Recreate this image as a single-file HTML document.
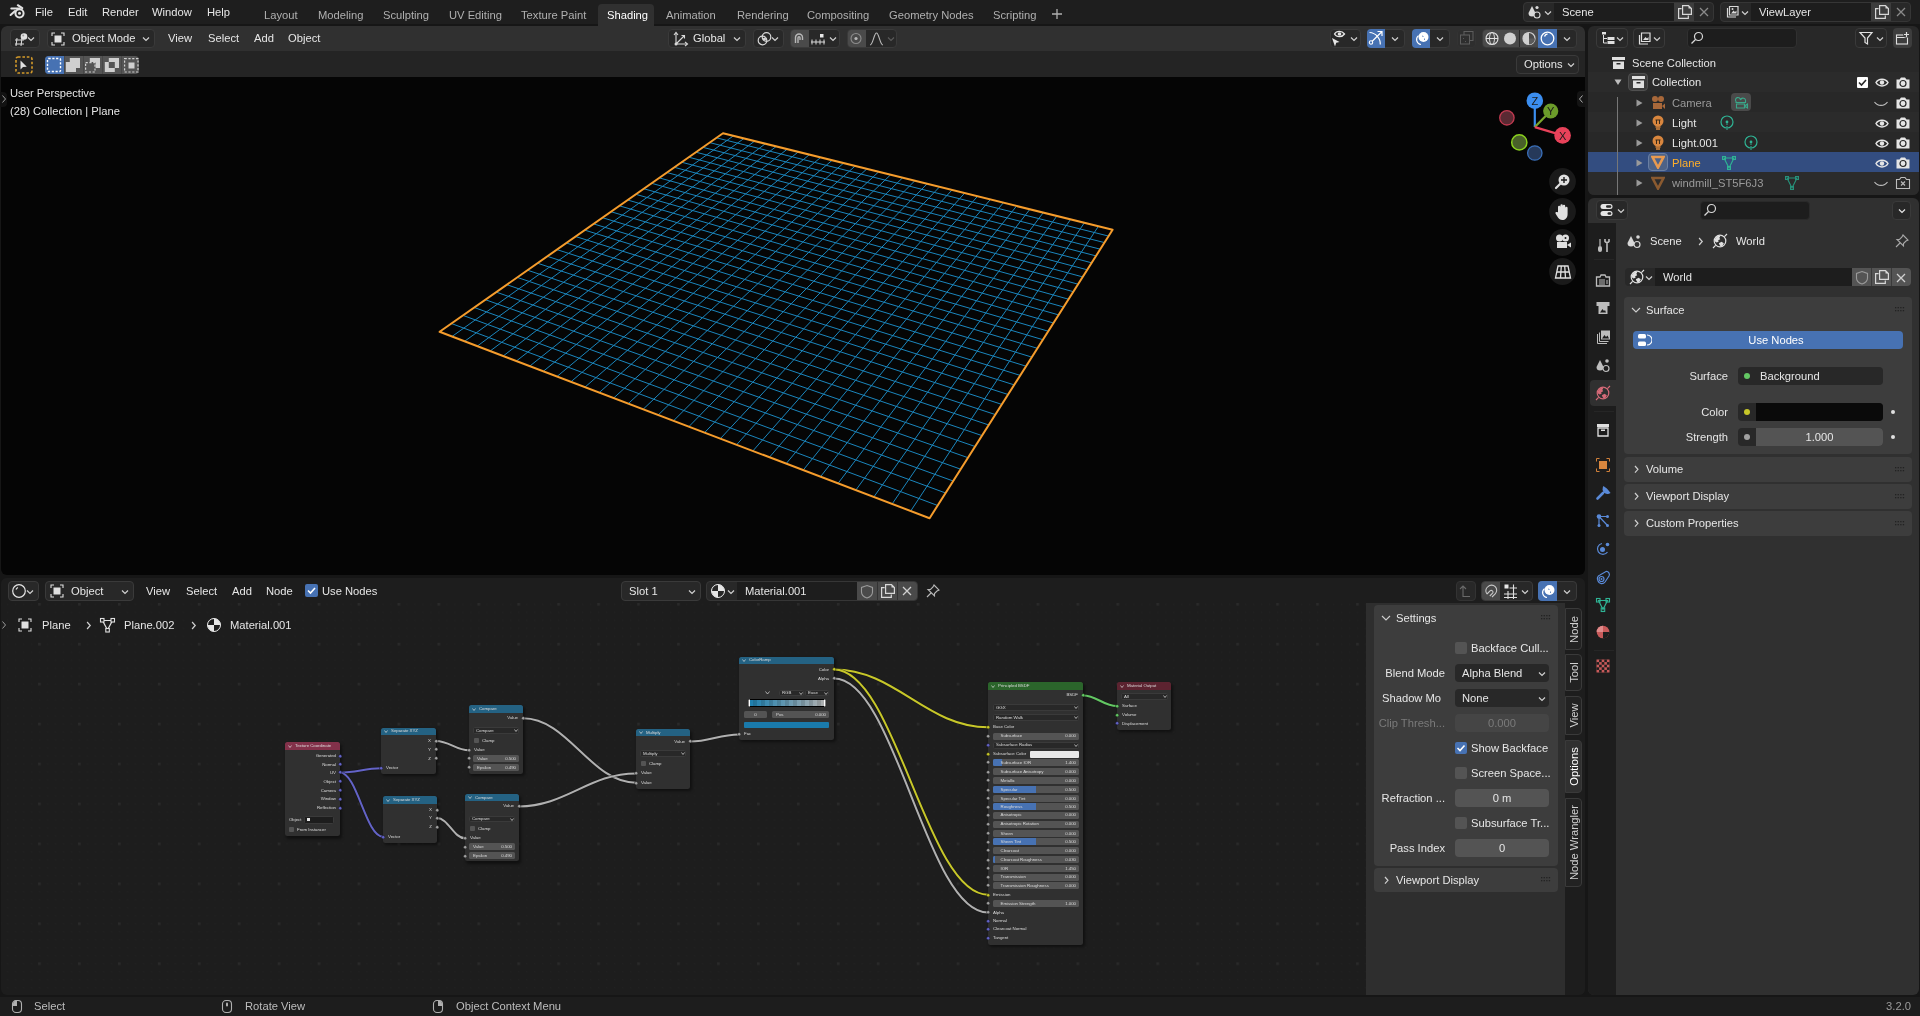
<!DOCTYPE html>
<html><head><meta charset="utf-8"><style>
html,body{margin:0;padding:0;width:1920px;height:1016px;overflow:hidden;background:#161616;}
body{position:relative;font-family:"Liberation Sans", sans-serif;}
.a{position:absolute;}
.t{position:absolute;white-space:nowrap;}
</style></head><body><div style="position:absolute;left:0;top:0;width:1920px;height:1016px;will-change:transform;">
<div class="a" style="left:0;top:0;width:1920px;height:1016px;background:#161616"></div>
<div class="a" style="left:0px;top:0px;width:1920px;height:24px;background:#1e1e1e;"></div>
<svg class="a" style="left:8px;top:3px;" width="18" height="18" viewBox="0 0 18 18"><g stroke="#e2e2e2" stroke-linecap="round" fill="none">
<circle cx="11.5" cy="10.3" r="4.1" stroke-width="2"/>
<path d="M3.3 5.6 H11.5" stroke-width="2"/><path d="M2.6 12 L7 8" stroke-width="2"/><path d="M9.8 2.2 L14.3 5.2" stroke-width="2"/>
</g><circle cx="11.5" cy="10.3" r="1.5" fill="#e2e2e2"/></svg>
<div class="t" style="left:35px;top:4.0px;font-size:11.2px;line-height:17px;color:#e6e6e6;">File</div>
<div class="t" style="left:68px;top:4.0px;font-size:11.2px;line-height:17px;color:#e6e6e6;">Edit</div>
<div class="t" style="left:102px;top:4.0px;font-size:11.2px;line-height:17px;color:#e6e6e6;">Render</div>
<div class="t" style="left:152px;top:4.0px;font-size:11.2px;line-height:17px;color:#e6e6e6;">Window</div>
<div class="t" style="left:207px;top:4.0px;font-size:11.2px;line-height:17px;color:#e6e6e6;">Help</div>
<div class="a" style="left:598px;top:4px;width:56px;height:22px;background:#303030;border-radius:4px 4px 0 0;"></div>
<div class="t" style="left:264px;top:6.5px;font-size:11.2px;line-height:17px;color:#b0b0b0;">Layout</div>
<div class="t" style="left:318px;top:6.5px;font-size:11.2px;line-height:17px;color:#b0b0b0;">Modeling</div>
<div class="t" style="left:383px;top:6.5px;font-size:11.2px;line-height:17px;color:#b0b0b0;">Sculpting</div>
<div class="t" style="left:449px;top:6.5px;font-size:11.2px;line-height:17px;color:#b0b0b0;">UV Editing</div>
<div class="t" style="left:521px;top:6.5px;font-size:11.2px;line-height:17px;color:#b0b0b0;">Texture Paint</div>
<div class="t" style="left:607px;top:6.5px;font-size:11.2px;line-height:17px;color:#ffffff;">Shading</div>
<div class="t" style="left:666px;top:6.5px;font-size:11.2px;line-height:17px;color:#b0b0b0;">Animation</div>
<div class="t" style="left:737px;top:6.5px;font-size:11.2px;line-height:17px;color:#b0b0b0;">Rendering</div>
<div class="t" style="left:807px;top:6.5px;font-size:11.2px;line-height:17px;color:#b0b0b0;">Compositing</div>
<div class="t" style="left:889px;top:6.5px;font-size:11.2px;line-height:17px;color:#b0b0b0;">Geometry Nodes</div>
<div class="t" style="left:993px;top:6.5px;font-size:11.2px;line-height:17px;color:#b0b0b0;">Scripting</div>
<svg class="a" style="left:1051px;top:8px;" width="12" height="12" viewBox="0 0 12 12"><path d="M6 1 V11 M1 6 H11" stroke="#b0b0b0" stroke-width="1.3"/></svg>
<div class="a" style="left:1523px;top:2px;width:191px;height:20px;background:#282828;border-radius:4px;box-sizing:border-box;border:1px solid #363636;"></div>
<div class="a" style="left:1554px;top:3px;width:120px;height:18px;background:#1d1d1d;"></div>
<div class="a" style="left:1674px;top:3px;width:20px;height:18px;background:#3d3d3d;"></div>
<div class="t" style="left:1562px;top:3.5px;font-size:11.2px;line-height:17px;color:#e6e6e6;">Scene</div>
<svg class="a" style="left:1527px;top:4px;" width="22" height="16" viewBox="0 0 22 16"><path d="M5 2 L1.5 9 A3.5 3.5 0 0 0 8.5 9 Z" fill="#d8d8d8"/><circle cx="10" cy="3.5" r="1.6" fill="#d8d8d8"/>
<circle cx="10" cy="11" r="3" fill="#282828" stroke="#d8d8d8" stroke-width="1.1"/></svg>
<svg class="a" style="left:1544px;top:9.5px;" width="8" height="6" viewBox="0 0 8 6"><path d="M1 1.5 L4 4.5 L7 1.5" fill="none" stroke="#d0d0d0" stroke-width="1.2"/></svg>
<svg class="a" style="left:1677px;top:4px;" width="16" height="16" viewBox="0 0 16 16"><path d="M5.6 1.7 H11.5 L14.4 4.6 V10.4 H5.6 Z" fill="none" stroke="#d8d8d8" stroke-width="1.2"/><path d="M11.5 1.7 L14.4 4.6 H11.5 Z" fill="#d8d8d8"/><path d="M4.6 4.6 H1.6 V14.4 H11.3 V11.4" fill="none" stroke="#d8d8d8" stroke-width="1.2"/></svg>
<svg class="a" style="left:1699px;top:7px;" width="10" height="10" viewBox="0 0 10 10"><path d="M1 1 L9 9 M9 1 L1 9" stroke="#8a8a8a" stroke-width="1.3"/></svg>
<div class="a" style="left:1720px;top:2px;width:191px;height:20px;background:#282828;border-radius:4px;box-sizing:border-box;border:1px solid #363636;"></div>
<div class="a" style="left:1751px;top:3px;width:120px;height:18px;background:#1d1d1d;"></div>
<div class="a" style="left:1871px;top:3px;width:20px;height:18px;background:#3d3d3d;"></div>
<div class="t" style="left:1759px;top:3.5px;font-size:11.2px;line-height:17px;color:#e6e6e6;">ViewLayer</div>
<svg class="a" style="left:1724px;top:4px;" width="22" height="16" viewBox="0 0 22 16"><path d="M3.5 4 V13 H12 M5.5 2.5 H14 V11 H5.5 Z" fill="none" stroke="#d8d8d8" stroke-width="1.2"/><path d="M7 9.5 L9.5 6.5 L11 8 L12.5 6.5 V9.5 Z" fill="#d8d8d8"/><circle cx="8.5" cy="5" r="1" fill="#d8d8d8"/></svg>
<svg class="a" style="left:1741px;top:9.5px;" width="8" height="6" viewBox="0 0 8 6"><path d="M1 1.5 L4 4.5 L7 1.5" fill="none" stroke="#d0d0d0" stroke-width="1.2"/></svg>
<svg class="a" style="left:1874px;top:4px;" width="16" height="16" viewBox="0 0 16 16"><path d="M5.6 1.7 H11.5 L14.4 4.6 V10.4 H5.6 Z" fill="none" stroke="#d8d8d8" stroke-width="1.2"/><path d="M11.5 1.7 L14.4 4.6 H11.5 Z" fill="#d8d8d8"/><path d="M4.6 4.6 H1.6 V14.4 H11.3 V11.4" fill="none" stroke="#d8d8d8" stroke-width="1.2"/></svg>
<svg class="a" style="left:1896px;top:7px;" width="10" height="10" viewBox="0 0 10 10"><path d="M1 1 L9 9 M9 1 L1 9" stroke="#8a8a8a" stroke-width="1.3"/></svg>
<div class="a" style="left:1px;top:26px;width:1584px;height:549px;background:#050505;border-radius:6px;"></div>
<div class="a" style="left:1px;top:26px;width:1584px;height:25px;background:#303030;border-radius:6px 6px 0 0;"></div>
<div class="a" style="left:1px;top:51px;width:1584px;height:26px;background:#242424;"></div>
<svg class="a" style="left:0px;top:0px;" width="1586" height="576" viewBox="0 0 1586 576"><path d="M451.4 323.5L937.7 505.5M452.0 336.5L733.5 135.8M463.0 315.4L945.6 493.0M464.6 341.3L744.0 138.4M474.3 307.5L953.2 481.0M477.3 346.1L754.7 141.1M485.4 299.7L960.7 469.2M490.2 351.0L765.4 143.7M496.2 292.1L968.0 457.7M503.2 356.0L776.3 146.4M506.9 284.7L975.1 446.5M516.4 361.0L787.3 149.1M517.3 277.4L982.0 435.6M529.8 366.1L798.3 151.9M527.5 270.2L988.8 425.0M543.3 371.3L809.5 154.6M537.5 263.2L995.4 414.6M557.0 376.5L820.7 157.4M547.3 256.3L1001.8 404.4M570.9 381.8L832.1 160.3M556.9 249.6L1008.1 394.5M585.0 387.1L843.6 163.1M566.4 243.0L1014.2 384.9M599.3 392.5L855.2 166.0M575.6 236.5L1020.2 375.4M613.7 398.0L866.9 168.9M584.7 230.1L1026.1 366.2M628.3 403.6L878.7 171.8M593.6 223.9L1031.8 357.1M643.2 409.2L890.6 174.8M602.4 217.7L1037.4 348.3M658.2 415.0L902.7 177.7M610.9 211.7L1042.9 339.7M673.5 420.8L914.8 180.8M619.4 205.8L1048.2 331.2M688.9 426.6L927.1 183.8M627.6 200.0L1053.5 323.0M704.6 432.6L939.5 186.9M635.8 194.3L1058.6 314.9M720.4 438.6L952.0 190.0M643.7 188.7L1063.6 307.0M736.5 444.8L964.7 193.1M651.6 183.3L1068.5 299.2M752.8 451.0L977.5 196.3M659.3 177.9L1073.4 291.7M769.4 457.3L990.4 199.5M666.8 172.5L1078.1 284.2M786.2 463.6L1003.4 202.7M674.3 167.3L1082.7 276.9M803.2 470.1L1016.6 206.0M681.6 162.2L1087.2 269.8M820.5 476.7L1029.9 209.3M688.8 157.2L1091.7 262.8M838.0 483.4L1043.3 212.6M695.9 152.2L1096.0 255.9M855.8 490.1L1056.9 216.0M702.8 147.3L1100.3 249.2M873.8 497.0L1070.6 219.4M709.7 142.6L1104.5 242.6M892.1 504.0L1084.4 222.8M716.4 137.8L1108.6 236.1M910.7 511.0L1098.4 226.3" fill="none" stroke="#1b86bd" stroke-width="1"/><path d="M439.6 331.8L723.0 133.2L1112.6 229.8L929.6 518.2Z" fill="none" stroke="#f59c2c" stroke-width="2" stroke-linejoin="round"/></svg>
<div class="t" style="left:10px;top:84.9px;font-size:11.2px;line-height:17px;color:#e6e6e6;text-shadow:0 1px 1px #000;">User Perspective</div>
<div class="t" style="left:10px;top:102.9px;font-size:11.2px;line-height:17px;color:#e6e6e6;text-shadow:0 1px 1px #000;">(28) Collection | Plane</div>
<div class="a" style="left:0px;top:92px;width:7px;height:15px;background:#121212;border-radius:0 4px 4px 0;"></div>
<svg class="a" style="left:1px;top:93.5px;" width="6" height="10" viewBox="0 0 6 10"><path d="M1.5 1.5 L4.5 5 L1.5 8.5" fill="none" stroke="#9a9a9a" stroke-width="1"/></svg>
<div class="a" style="left:1577px;top:91px;width:8px;height:16px;background:#141414;border-radius:4px 0 0 4px;"></div>
<svg class="a" style="left:1578px;top:94px;" width="6" height="10" viewBox="0 0 6 10"><path d="M4.5 1.5 L1.5 5 L4.5 8.5" fill="none" stroke="#b0b0b0" stroke-width="1"/></svg>
<svg class="a" style="left:1490px;top:85px;" width="90" height="85" viewBox="0 0 90 85"><g transform="translate(-1490,-85)">
<line x1="1534.8" y1="127.1" x2="1534.8" y2="100.7" stroke="#3b8ef0" stroke-width="2.2"/>
<line x1="1534.8" y1="127.1" x2="1550.7" y2="111" stroke="#7ba72c" stroke-width="2.2"/>
<line x1="1534.8" y1="127.1" x2="1562.6" y2="135.4" stroke="#e8425a" stroke-width="2.2"/>
<circle cx="1506.9" cy="117.8" r="7.2" fill="#5a2a33" stroke="#c23a50" stroke-width="1.3"/>
<circle cx="1519.3" cy="142.4" r="7.6" fill="#49602a" stroke="#8ad11e" stroke-width="1.5"/>
<circle cx="1534.8" cy="153" r="7.2" fill="#26395a" stroke="#3a6fb8" stroke-width="1.3"/>
<circle cx="1534.8" cy="100.7" r="8.3" fill="#3b8ef0"/>
<circle cx="1550.7" cy="111" r="7.6" fill="#6c9c2a"/>
<circle cx="1562.6" cy="135.4" r="8.3" fill="#e8425a"/>
<text x="1534.8" y="104.8" font-size="11" text-anchor="middle" fill="#1a1a1a" font-family="Liberation Sans">Z</text>
<text x="1550.7" y="115" font-size="11" text-anchor="middle" fill="#1a1a1a" font-family="Liberation Sans">Y</text>
<text x="1562.6" y="139.5" font-size="11" text-anchor="middle" fill="#1a1a1a" font-family="Liberation Sans">X</text>
</g></svg>
<svg class="a" style="left:1549px;top:167.7px;" width="27" height="27" viewBox="0 0 27 27"><circle cx="13.5" cy="13.5" r="13.4" fill="#1a1a1a"/></svg>
<svg class="a" style="left:1549px;top:198.3px;" width="27" height="27" viewBox="0 0 27 27"><circle cx="13.5" cy="13.5" r="13.4" fill="#1a1a1a"/></svg>
<svg class="a" style="left:1549px;top:228.7px;" width="27" height="27" viewBox="0 0 27 27"><circle cx="13.5" cy="13.5" r="13.4" fill="#1a1a1a"/></svg>
<svg class="a" style="left:1549px;top:258.2px;" width="27" height="27" viewBox="0 0 27 27"><circle cx="13.5" cy="13.5" r="13.4" fill="#1a1a1a"/></svg>
<svg class="a" style="left:1553px;top:172px;" width="20" height="20" viewBox="0 0 20 20"><circle cx="11" cy="8" r="5.5" fill="#e0e0e0"/><path d="M11 5 V11 M8 8 H14" stroke="#1a1a1a" stroke-width="1.4"/><path d="M7 12 L3 16" stroke="#e0e0e0" stroke-width="2.2" stroke-linecap="round"/></svg>
<svg class="a" style="left:1553px;top:202px;" width="20" height="20" viewBox="0 0 20 20"><path d="M5 10 V5 a1.2 1.2 0 0 1 2.4 0 V9 V3.5 a1.2 1.2 0 0 1 2.4 0 V9 V4 a1.2 1.2 0 0 1 2.4 0 V9.5 V6 a1.2 1.2 0 0 1 2.4 0 V12 C14.6 16 12 18 9.5 18 C7 18 5.5 16.5 4 14 L2.5 11.5 a1.2 1.2 0 0 1 2-1.2 Z" fill="#e0e0e0"/></svg>
<svg class="a" style="left:1553px;top:232px;" width="20" height="20" viewBox="0 0 20 20"><circle cx="6.5" cy="6" r="3.5" fill="#e0e0e0"/><circle cx="12.5" cy="6" r="3.5" fill="#e0e0e0"/><rect x="4" y="10" width="10" height="6" fill="#e0e0e0"/><path d="M14 13 L18 10.5 V15.5 Z" fill="#e0e0e0"/><circle cx="12.5" cy="6" r="1" fill="#1a1a1a"/></svg>
<svg class="a" style="left:1553px;top:262px;" width="20" height="20" viewBox="0 0 20 20"><path d="M5 4 H15 L17.5 16 H2.5 Z M3.8 10 H16.3 M8.3 4 L7.5 16 M11.7 4 L12.5 16" fill="none" stroke="#e0e0e0" stroke-width="1.3"/></svg>
<div class="a" style="left:10px;top:29px;width:30px;height:19px;background:#282828;border-radius:4px;box-sizing:border-box;border:1px solid #3a3a3a;"></div>
<svg class="a" style="left:27px;top:36.0px;" width="8" height="6" viewBox="0 0 8 6"><path d="M1 1.5 L4 4.5 L7 1.5" fill="none" stroke="#d0d0d0" stroke-width="1.2"/></svg>
<svg class="a" style="left:13px;top:31px;" width="20" height="16" viewBox="0 0 20 16"><path d="M2 9 H11 M2 13 H11 M4 7 L3 15 M9 7 L8 15" stroke="#d8d8d8" stroke-width="1.1" fill="none"/><circle cx="11" cy="5.5" r="3.3" fill="#e0e0e0"/><circle cx="10.2" cy="4.6" r="1" fill="#9a9a9a"/></svg>
<div class="a" style="left:47px;top:29px;width:108px;height:19px;background:#282828;border-radius:4px;box-sizing:border-box;border:1px solid #3a3a3a;"></div>
<svg class="a" style="left:142px;top:36.0px;" width="8" height="6" viewBox="0 0 8 6"><path d="M1 1.5 L4 4.5 L7 1.5" fill="none" stroke="#d0d0d0" stroke-width="1.2"/></svg>
<svg class="a" style="left:51px;top:31.5px;" width="14" height="14" viewBox="0 0 14 14"><path d="M1 4 V1 H4 M10 1 H13 V4 M13 10 V13 H10 M4 13 H1 V10" fill="none" stroke="#e0e0e0" stroke-width="1.1"/><rect x="3.5" y="3.5" width="7" height="7" fill="#e0e0e0"/></svg>
<div class="t" style="left:72px;top:30.0px;font-size:11.2px;line-height:17px;color:#e6e6e6;">Object Mode</div>
<div class="t" style="left:168px;top:30.0px;font-size:11.2px;line-height:17px;color:#e6e6e6;">View</div>
<div class="t" style="left:208px;top:30.0px;font-size:11.2px;line-height:17px;color:#e6e6e6;">Select</div>
<div class="t" style="left:254px;top:30.0px;font-size:11.2px;line-height:17px;color:#e6e6e6;">Add</div>
<div class="t" style="left:288px;top:30.0px;font-size:11.2px;line-height:17px;color:#e6e6e6;">Object</div>
<div class="a" style="left:668px;top:29px;width:78px;height:19px;background:#282828;border-radius:4px;box-sizing:border-box;border:1px solid #3a3a3a;"></div>
<svg class="a" style="left:733px;top:36.0px;" width="8" height="6" viewBox="0 0 8 6"><path d="M1 1.5 L4 4.5 L7 1.5" fill="none" stroke="#d0d0d0" stroke-width="1.2"/></svg>
<svg class="a" style="left:673px;top:31px;" width="16" height="16" viewBox="0 0 16 16"><path d="M3 2 V13 H14 M3 13 L11 5" fill="none" stroke="#d8d8d8" stroke-width="1.1"/><path d="M1 4 L3 1.5 L5 4 M12 11 L14.5 13 L12 15 M8.5 4.5 H11.5 V7.5" fill="none" stroke="#d8d8d8" stroke-width="1.1"/><circle cx="3" cy="13" r="1.5" fill="#d8d8d8"/></svg>
<div class="t" style="left:693px;top:30.0px;font-size:11.2px;line-height:17px;color:#e6e6e6;">Global</div>
<div class="a" style="left:753px;top:29px;width:31px;height:19px;background:#282828;border-radius:4px;box-sizing:border-box;border:1px solid #3a3a3a;"></div>
<svg class="a" style="left:771px;top:36.0px;" width="8" height="6" viewBox="0 0 8 6"><path d="M1 1.5 L4 4.5 L7 1.5" fill="none" stroke="#d0d0d0" stroke-width="1.2"/></svg>
<svg class="a" style="left:756px;top:31px;" width="18" height="16" viewBox="0 0 18 16"><circle cx="6.5" cy="9.5" r="4.3" fill="none" stroke="#d8d8d8" stroke-width="1.2"/><circle cx="10.5" cy="6" r="4.3" fill="none" stroke="#d8d8d8" stroke-width="1.2"/><circle cx="8.5" cy="8" r="1.6" fill="#d8d8d8"/></svg>
<div class="a" style="left:790px;top:29px;width:50px;height:19px;background:#282828;border-radius:4px;box-sizing:border-box;border:1px solid #3a3a3a;"></div>
<div class="a" style="left:791px;top:30px;width:18px;height:17px;background:#4a4a4a;border-radius:3px 0 0 3px;"></div>
<svg class="a" style="left:792px;top:31px;" width="14" height="15" viewBox="0 0 14 15"><path d="M3.5 12 V6.5 A3.5 3.5 0 0 1 10.5 6.5 V9 M6 12 V6.8 A1 1 0 0 1 8 6.8 V9" fill="none" stroke="#b8b8b8" stroke-width="1.4"/></svg>
<svg class="a" style="left:810px;top:31px;" width="16" height="16" viewBox="0 0 16 16"><path d="M1 11 H15 M2 8.5 V13.5 M6 8.5 V13.5 M10 8.5 V13.5 M14 8.5 V13.5" stroke="#d8d8d8" stroke-width="1"/><rect x="10" y="3" width="3.5" height="3.5" fill="#e8e8e8"/></svg>
<svg class="a" style="left:829px;top:35.5px;" width="8" height="6" viewBox="0 0 8 6"><path d="M1 1.5 L4 4.5 L7 1.5" fill="none" stroke="#d0d0d0" stroke-width="1.2"/></svg>
<div class="a" style="left:847px;top:29px;width:50px;height:19px;background:#282828;border-radius:4px;box-sizing:border-box;border:1px solid #3a3a3a;"></div>
<div class="a" style="left:848px;top:30px;width:18px;height:17px;background:#4a4a4a;border-radius:3px 0 0 3px;"></div>
<svg class="a" style="left:849px;top:31px;" width="14" height="15" viewBox="0 0 14 15"><circle cx="7" cy="7.5" r="5" fill="none" stroke="#8c8c8c" stroke-width="1.1"/><circle cx="7" cy="7.5" r="1.6" fill="#b8b8b8"/></svg>
<svg class="a" style="left:869px;top:30px;" width="16" height="18" viewBox="0 0 16 18"><path d="M1 15 C4 15 5 3 7.5 3 C10 3 11 15 14 15" fill="none" stroke="#bdbdbd" stroke-width="1.1"/></svg>
<svg class="a" style="left:887px;top:35.5px;" width="8" height="6" viewBox="0 0 8 6"><path d="M1 1.5 L4 4.5 L7 1.5" fill="none" stroke="#5a5a5a" stroke-width="1.2"/></svg>
<div class="a" style="left:1330px;top:29px;width:31px;height:19px;background:#282828;border-radius:4px;box-sizing:border-box;border:1px solid #3a3a3a;"></div>
<svg class="a" style="left:1331px;top:29px;" width="18" height="19" viewBox="0 0 18 19"><path d="M3.5 5 C5.5 1.5 11 1.5 13.5 5 C11 8.5 5.5 8.5 3.5 5 Z" fill="none" stroke="#e6e6e6" stroke-width="1.3"/><circle cx="8.5" cy="5" r="1.8" fill="#e6e6e6"/><path d="M1 9 L8.5 13 L5.2 13.8 L4 17.5 Z" fill="#e6e6e6"/></svg>
<svg class="a" style="left:1350px;top:35.5px;" width="8" height="6" viewBox="0 0 8 6"><path d="M1 1.5 L4 4.5 L7 1.5" fill="none" stroke="#d0d0d0" stroke-width="1.2"/></svg>
<div class="a" style="left:1367px;top:29px;width:38px;height:19px;background:#282828;border-radius:4px;box-sizing:border-box;border:1px solid #3a3a3a;"></div>
<div class="a" style="left:1367px;top:29px;width:18px;height:19px;background:#4772b3;border-radius:4px 0 0 4px;"></div>
<svg class="a" style="left:1368px;top:29px;" width="17" height="19" viewBox="0 0 17 19"><path d="M1.5 3.5 A11.5 11.5 0 0 1 12.3 15.5" fill="none" stroke="#fff" stroke-width="1.2"/><path d="M3.5 13 L13.5 3 M9.5 2.5 H14 V7" fill="none" stroke="#fff" stroke-width="1.2"/><circle cx="3" cy="13.5" r="1.7" fill="#4772b3" stroke="#fff" stroke-width="1.1"/></svg>
<svg class="a" style="left:1391px;top:35.5px;" width="8" height="6" viewBox="0 0 8 6"><path d="M1 1.5 L4 4.5 L7 1.5" fill="none" stroke="#d0d0d0" stroke-width="1.2"/></svg>
<div class="a" style="left:1412px;top:29px;width:38px;height:19px;background:#282828;border-radius:4px;box-sizing:border-box;border:1px solid #3a3a3a;"></div>
<div class="a" style="left:1412px;top:29px;width:18px;height:19px;background:#4772b3;border-radius:4px 0 0 4px;"></div>
<svg class="a" style="left:1413px;top:29px;" width="17" height="19" viewBox="0 0 17 19"><circle cx="10.5" cy="8" r="5" fill="#fff"/><path d="M8 15.5 A5 5 0 0 1 5.5 6.6" fill="none" stroke="#fff" stroke-width="1.2"/><path d="M9 7 L10.5 7.5 M11.5 9.5 V11" stroke="#4772b3" stroke-width="0.8"/></svg>
<svg class="a" style="left:1436px;top:35.5px;" width="8" height="6" viewBox="0 0 8 6"><path d="M1 1.5 L4 4.5 L7 1.5" fill="none" stroke="#d0d0d0" stroke-width="1.2"/></svg>
<div class="a" style="left:1457px;top:29px;width:19px;height:19px;background:#2e2e2e;border-radius:4px;box-sizing:border-box;border:1px solid #333;"></div>
<svg class="a" style="left:1459px;top:30px;" width="16" height="16" viewBox="0 0 16 16"><rect x="5" y="1.5" width="9" height="9" fill="none" stroke="#5e5e5e" stroke-width="1"/><rect x="1.5" y="5" width="9" height="9" fill="#2e2e2e" stroke="#5e5e5e" stroke-width="1"/><path d="M4.5 8 V9 M6 11.5 H7" stroke="#5e5e5e" stroke-width="0.9"/></svg>
<div class="a" style="left:1482px;top:29px;width:95px;height:19px;background:#282828;border-radius:4px;box-sizing:border-box;border:1px solid #3a3a3a;"></div>
<div class="a" style="left:1483px;top:30px;width:18px;height:17px;background:#4a4a4a;border-radius:3px 0 0 3px;"></div>
<div class="a" style="left:1501px;top:30px;width:18px;height:17px;background:#4a4a4a;"></div>
<div class="a" style="left:1520px;top:30px;width:18px;height:17px;background:#4a4a4a;"></div>
<div class="a" style="left:1538px;top:29px;width:19px;height:19px;background:#4772b3;"></div>
<svg class="a" style="left:1483px;top:30px;" width="18" height="17" viewBox="0 0 18 17"><circle cx="9" cy="8.5" r="6" fill="none" stroke="#e0e0e0" stroke-width="1.1"/><ellipse cx="9" cy="8.5" rx="2.5" ry="6" fill="none" stroke="#e0e0e0" stroke-width="1"/><path d="M3 8.5 H15" stroke="#e0e0e0" stroke-width="1"/></svg>
<svg class="a" style="left:1501px;top:30px;" width="18" height="17" viewBox="0 0 18 17"><circle cx="9" cy="8.5" r="6" fill="#d0d0d0"/></svg>
<svg class="a" style="left:1520px;top:30px;" width="18" height="17" viewBox="0 0 18 17"><circle cx="9" cy="8.5" r="6" fill="none" stroke="#d0d0d0" stroke-width="1.2"/><path d="M9 8.5 V2.5 A6 6 0 0 0 3 8.5 A6 6 0 0 0 9 14.5 Z" fill="#d0d0d0"/><path d="M9 8.5 H15 A6 6 0 0 1 9 14.5 Z" fill="#5a5a5a"/></svg>
<svg class="a" style="left:1538px;top:29px;" width="19" height="19" viewBox="0 0 19 19"><circle cx="9.5" cy="9.5" r="6.3" fill="none" stroke="#fff" stroke-width="1.3"/><path d="M6.5 7.5 A3.5 3.5 0 0 1 9.5 5" fill="none" stroke="#fff" stroke-width="1.4"/></svg>
<svg class="a" style="left:1563px;top:35.5px;" width="8" height="6" viewBox="0 0 8 6"><path d="M1 1.5 L4 4.5 L7 1.5" fill="none" stroke="#d0d0d0" stroke-width="1.2"/></svg>
<svg class="a" style="left:14px;top:55px;" width="20" height="20" viewBox="0 0 20 20"><rect x="2" y="2" width="16" height="16" rx="2" fill="none" stroke="#d49a2a" stroke-width="1.6" stroke-dasharray="2.6 1.8"/><path d="M6.5 5.5 V14.5 L9 12 L12.8 11.8 Z" fill="#e0e0e0"/></svg>
<div class="a" style="left:45px;top:56px;width:94px;height:18px;background:#545454;border-radius:4px;"></div>
<div class="a" style="left:45px;top:56px;width:19px;height:18px;background:#4772b3;border-radius:4px 0 0 4px;"></div>
<div class="a" style="left:64px;top:56px;width:1px;height:18px;background:#474747;"></div>
<div class="a" style="left:83px;top:56px;width:1px;height:18px;background:#474747;"></div>
<div class="a" style="left:102px;top:56px;width:1px;height:18px;background:#474747;"></div>
<div class="a" style="left:121px;top:56px;width:1px;height:18px;background:#474747;"></div>
<svg class="a" style="left:45px;top:56px;" width="94" height="18" viewBox="0 0 94 18"><rect x="2.5" y="2.5" width="13" height="13" rx="1" fill="none" stroke="#fff" stroke-width="1.4" stroke-dasharray="2.2 1.6"/>
<path d="M24.8 2 H35 V12 H31 V16 H20.8 V6 H24.8 Z" fill="#cfcfcf"/>
<rect x="40.6" y="6.6" width="9.4" height="9.4" fill="none" stroke="#cfcfcf" stroke-width="1.2" stroke-dasharray="2.2 1.6"/><path d="M44.8 2 H55 V12 H50.6 V6 H44.8 Z" fill="#cfcfcf"/>
<path d="M63.8 2 H74 V12 H69.8 V6 H63.8 Z M59.8 6 H63.8 V12 H69.8 V16 H59.8 Z" fill="#cfcfcf"/>
<rect x="79.6" y="2.6" width="13.4" height="13.4" fill="none" stroke="#cfcfcf" stroke-width="1.2" stroke-dasharray="2.2 1.6"/><rect x="83.5" y="6.5" width="6" height="6" fill="#cfcfcf"/></svg>
<div class="a" style="left:1516px;top:55px;width:63px;height:19px;background:#282828;border-radius:4px;box-sizing:border-box;border:1px solid #3a3a3a;"></div>
<div class="t" style="left:1524px;top:56.0px;font-size:11.2px;line-height:17px;color:#e6e6e6;">Options</div>
<svg class="a" style="left:1567px;top:62px;" width="8" height="6" viewBox="0 0 8 6"><path d="M1 1.5 L4 4.5 L7 1.5" fill="none" stroke="#d0d0d0" stroke-width="1.2"/></svg>
<div class="a" style="left:1588px;top:26px;width:331px;height:169px;background:#282828;border-radius:6px;"></div>
<div class="a" style="left:1588px;top:72px;width:331px;height:20px;background:#2b2b2b;"></div>
<div class="a" style="left:1588px;top:112px;width:331px;height:20px;background:#2b2b2b;"></div>
<div class="a" style="left:1588px;top:152px;width:331px;height:20px;background:#2b2b2b;"></div>
<div class="a" style="left:1588px;top:152px;width:331px;height:20px;background:#334d80;"></div>
<div class="a" style="left:1588px;top:172px;width:331px;height:23px;background:#2b2b2b;border-radius:0 0 6px 6px;"></div>
<div class="a" style="left:1596px;top:28px;width:32px;height:20px;background:#282828;border-radius:4px;box-sizing:border-box;border:1px solid #3a3a3a;"></div>
<svg class="a" style="left:1599px;top:30px;" width="18" height="16" viewBox="0 0 18 16"><rect x="3" y="2" width="4" height="2.5" fill="#e0e0e0"/><path d="M4.5 5 V13 H8 M4.5 8.5 H8" fill="none" stroke="#e0e0e0" stroke-width="1"/><rect x="8.5" y="7" width="7" height="3" fill="#e0e0e0"/><rect x="8.5" y="11" width="7" height="3" fill="#e0e0e0"/></svg>
<svg class="a" style="left:1616px;top:35.5px;" width="8" height="6" viewBox="0 0 8 6"><path d="M1 1.5 L4 4.5 L7 1.5" fill="none" stroke="#d0d0d0" stroke-width="1.2"/></svg>
<div class="a" style="left:1633px;top:28px;width:32px;height:20px;background:#282828;border-radius:4px;box-sizing:border-box;border:1px solid #3a3a3a;"></div>
<svg class="a" style="left:1636px;top:30px;" width="18" height="16" viewBox="0 0 18 16"><path d="M3.5 5 V14 H12 M5.5 3 H14 V11.5 H5.5 Z" fill="none" stroke="#e0e0e0" stroke-width="1.2"/><path d="M7 10 L9.5 7 L11 8.5 L12.5 7 V10 Z" fill="#e0e0e0"/></svg>
<svg class="a" style="left:1653px;top:35.5px;" width="8" height="6" viewBox="0 0 8 6"><path d="M1 1.5 L4 4.5 L7 1.5" fill="none" stroke="#d0d0d0" stroke-width="1.2"/></svg>
<div class="a" style="left:1687px;top:28px;width:110px;height:20px;background:#1d1d1d;border-radius:4px;box-sizing:border-box;border:1px solid #303030;"></div>
<svg class="a" style="left:1690px;top:31px;" width="14" height="14" viewBox="0 0 14 14"><circle cx="8.5" cy="5.5" r="4" fill="none" stroke="#d8d8d8" stroke-width="1.2"/><path d="M5.5 8.5 L1.5 12.5" stroke="#d8d8d8" stroke-width="1.3"/></svg>
<div class="a" style="left:1855px;top:28px;width:32px;height:20px;background:#282828;border-radius:4px;box-sizing:border-box;border:1px solid #3a3a3a;"></div>
<svg class="a" style="left:1858px;top:30px;" width="16" height="16" viewBox="0 0 16 16"><path d="M2 2.5 H14 L9.5 8 V14 L7 12.5 V8 Z" fill="none" stroke="#e0e0e0" stroke-width="1.2"/></svg>
<svg class="a" style="left:1876px;top:35.5px;" width="8" height="6" viewBox="0 0 8 6"><path d="M1 1.5 L4 4.5 L7 1.5" fill="none" stroke="#d0d0d0" stroke-width="1.2"/></svg>
<div class="a" style="left:1893px;top:28px;width:19px;height:20px;background:#3d3d3d;border-radius:4px;"></div>
<svg class="a" style="left:1894px;top:30px;" width="17" height="16" viewBox="0 0 17 16"><rect x="2.5" y="5" width="11" height="9" fill="none" stroke="#e0e0e0" stroke-width="1.1"/><path d="M2.5 7.5 H13.5" stroke="#e0e0e0" stroke-width="1"/><circle cx="12.5" cy="4.5" r="3.3" fill="#3d3d3d"/><path d="M12.5 2 V7 M10 4.5 H15" stroke="#e0e0e0" stroke-width="1.2"/></svg>
<svg class="a" style="left:1611px;top:56px;" width="15" height="14" viewBox="0 0 15 14"><rect x="1" y="1" width="13" height="3" fill="#e0e0e0"/><path d="M2 5.5 H13 V13 H2 Z" fill="#e0e0e0"/><rect x="5.5" y="7" width="4" height="1.5" fill="#282828"/></svg>
<div class="t" style="left:1632px;top:54.5px;font-size:11.2px;line-height:17px;color:#e6e6e6;">Scene Collection</div>
<svg class="a" style="left:1614px;top:78px;" width="8" height="8" viewBox="0 0 8 8"><path d="M0.5 1.5 H7.5 L4 7 Z" fill="#bdbdbd"/></svg>
<div class="a" style="left:1628px;top:73px;width:20px;height:18px;background:#3c3c3c;border-radius:4px;box-sizing:border-box;border:1px solid #505050;"></div>
<svg class="a" style="left:1631px;top:75px;" width="15" height="14" viewBox="0 0 15 14"><rect x="1" y="1" width="13" height="3" fill="#e0e0e0"/><path d="M2 5.5 H13 V13 H2 Z" fill="#e0e0e0"/><rect x="5.5" y="7" width="4" height="1.5" fill="#282828"/></svg>
<div class="t" style="left:1652px;top:74.0px;font-size:11.2px;line-height:17px;color:#e6e6e6;">Collection</div>
<div class="a" style="left:1857px;top:77px;width:11px;height:11px;background:#ffffff;border-radius:1px;"></div>
<svg class="a" style="left:1857px;top:77px;" width="11" height="11" viewBox="0 0 11 11"><path d="M2 5.5 L4.5 8 L9 3" fill="none" stroke="#282828" stroke-width="1.6"/></svg>
<svg class="a" style="left:1875px;top:77.0px;" width="14" height="11" viewBox="0 0 14 11"><path d="M1 5.5 C3.5 1 10.5 1 13 5.5 C10.5 10 3.5 10 1 5.5 Z" fill="none" stroke="#e6e6e6" stroke-width="1.5"/><circle cx="7" cy="5.5" r="2.2" fill="#e6e6e6"/></svg>
<svg class="a" style="left:1895px;top:75px;" width="16" height="15" viewBox="0 0 16 15"><path d="M1.5 4.5 H4.5 L6 2.5 H10 L11.5 4.5 H14.5 V13.5 H1.5 Z" fill="#e6e6e6"/><circle cx="8" cy="8.5" r="3" fill="none" stroke="#282828" stroke-width="1.2"/></svg>
<svg class="a" style="left:1617px;top:97px;" width="1" height="98" viewBox="0 0 1 98"><rect x="0" y="0" width="1" height="98" fill="#777"/></svg>
<svg class="a" style="left:1636px;top:99px;" width="7" height="8" viewBox="0 0 7 8"><path d="M0.5 0.5 L6.5 4 L0.5 7.5 Z" fill="#9a9a9a"/></svg>
<div class="t" style="left:1672px;top:94.5px;font-size:11.2px;line-height:17px;color:#9a9a9a;">Camera</div>
<svg class="a" style="left:1636px;top:119px;" width="7" height="8" viewBox="0 0 7 8"><path d="M0.5 0.5 L6.5 4 L0.5 7.5 Z" fill="#9a9a9a"/></svg>
<div class="t" style="left:1672px;top:114.5px;font-size:11.2px;line-height:17px;color:#e6e6e6;">Light</div>
<svg class="a" style="left:1636px;top:139px;" width="7" height="8" viewBox="0 0 7 8"><path d="M0.5 0.5 L6.5 4 L0.5 7.5 Z" fill="#9a9a9a"/></svg>
<div class="t" style="left:1672px;top:134.5px;font-size:11.2px;line-height:17px;color:#e6e6e6;">Light.001</div>
<svg class="a" style="left:1636px;top:159px;" width="7" height="8" viewBox="0 0 7 8"><path d="M0.5 0.5 L6.5 4 L0.5 7.5 Z" fill="#9a9a9a"/></svg>
<div class="t" style="left:1672px;top:154.5px;font-size:11.2px;line-height:17px;color:#ffaf29;">Plane</div>
<svg class="a" style="left:1636px;top:179px;" width="7" height="8" viewBox="0 0 7 8"><path d="M0.5 0.5 L6.5 4 L0.5 7.5 Z" fill="#9a9a9a"/></svg>
<div class="t" style="left:1672px;top:174.5px;font-size:11.2px;line-height:17px;color:#9a9a9a;">windmill_ST5F6J3</div>
<svg class="a" style="left:1650px;top:95px;" width="16" height="15" viewBox="0 0 16 15"><circle cx="5" cy="4" r="3" fill="#a8683a"/><circle cx="11" cy="4" r="3" fill="#a8683a"/><rect x="3" y="8" width="9" height="6" fill="#a8683a"/><path d="M12 11 L15 8.5 V14 Z" fill="#a8683a"/></svg>
<div class="a" style="left:1731px;top:93px;width:20px;height:18px;background:#4a4a4a;border-radius:4px;"></div>
<svg class="a" style="left:1733px;top:95px;" width="16" height="14" viewBox="0 0 16 14"><path d="M3 6.5 a2.5 2.5 0 1 1 4.5 -1.5 a2.5 2.5 0 1 1 5 1.5 V7.5 H3 Z" fill="none" stroke="#3aa88a" stroke-width="1.1"/><path d="M3.5 9 H11.5 V13 H3.5 Z M11.5 11 L14.5 9 V13 Z" fill="none" stroke="#3aa88a" stroke-width="1.1"/></svg>
<svg class="a" style="left:1651px;top:115px;" width="14" height="16" viewBox="0 0 14 16"><circle cx="7" cy="6" r="5.5" fill="#d8863e"/><path d="M4.5 12 H9.5 M5 14 H9" stroke="#d8863e" stroke-width="1.3"/><path d="M4.5 5 H9.5 M5.5 5 V9 M8.5 5 V9" stroke="#3a2a1a" stroke-width="1"/></svg>
<svg class="a" style="left:1651px;top:135px;" width="14" height="16" viewBox="0 0 14 16"><circle cx="7" cy="6" r="5.5" fill="#d8863e"/><path d="M4.5 12 H9.5 M5 14 H9" stroke="#d8863e" stroke-width="1.3"/><path d="M4.5 5 H9.5 M5.5 5 V9 M8.5 5 V9" stroke="#3a2a1a" stroke-width="1"/></svg>
<svg class="a" style="left:1720px;top:115px;" width="14" height="16" viewBox="0 0 14 16"><circle cx="7" cy="7" r="6" fill="none" stroke="#2fb394" stroke-width="1.2"/><circle cx="7" cy="7" r="1.4" fill="#2fb394"/><path d="M7 8.5 V15" stroke="#2fb394" stroke-width="1" stroke-dasharray="1.5 1"/></svg>
<svg class="a" style="left:1744px;top:135px;" width="14" height="16" viewBox="0 0 14 16"><circle cx="7" cy="7" r="6" fill="none" stroke="#2fb394" stroke-width="1.2"/><circle cx="7" cy="7" r="1.4" fill="#2fb394"/><path d="M7 8.5 V15" stroke="#2fb394" stroke-width="1" stroke-dasharray="1.5 1"/></svg>
<div class="a" style="left:1648px;top:153px;width:20px;height:18px;background:#4d6287;border-radius:4px;box-sizing:border-box;border:1px solid #6a7fa3;"></div>
<svg class="a" style="left:1651px;top:155px;" width="14" height="14" viewBox="0 0 14 14"><path d="M1.5 2 H12.5 L7 12.5 Z" fill="none" stroke="#e89a50" stroke-width="2.6" stroke-linejoin="miter"/></svg>
<svg class="a" style="left:1651px;top:176px;" width="14" height="14" viewBox="0 0 14 14"><path d="M1.5 2 H12.5 L7 12.5 Z" fill="none" stroke="#8a5a30" stroke-width="2.6" stroke-linejoin="miter"/></svg>
<svg class="a" style="left:1721px;top:155px;" width="16" height="16" viewBox="0 0 16 16"><path d="M3 3 H13 L8 13 Z" fill="none" stroke="#2fb394" stroke-width="1.1"/><rect x="1.5" y="1.5" width="3" height="3" fill="none" stroke="#2fb394" stroke-width="1"/><rect x="11.5" y="1.5" width="3" height="3" fill="none" stroke="#2fb394" stroke-width="1"/><rect x="6.5" y="11.5" width="3" height="3" fill="none" stroke="#2fb394" stroke-width="1"/></svg>
<svg class="a" style="left:1784px;top:175px;" width="16" height="16" viewBox="0 0 16 16"><path d="M3 3 H13 L8 13 Z" fill="none" stroke="#26917a" stroke-width="1.1"/><rect x="1.5" y="1.5" width="3" height="3" fill="none" stroke="#26917a" stroke-width="1"/><rect x="11.5" y="1.5" width="3" height="3" fill="none" stroke="#26917a" stroke-width="1"/><rect x="6.5" y="11.5" width="3" height="3" fill="none" stroke="#26917a" stroke-width="1"/></svg>
<svg class="a" style="left:1873px;top:98px;" width="16" height="12" viewBox="0 0 16 12"><path d="M1.5 4 C4.5 8.5 11.5 8.5 14.5 4" fill="none" stroke="#bdbdbd" stroke-width="1.1"/></svg>
<svg class="a" style="left:1895px;top:95px;" width="16" height="15" viewBox="0 0 16 15"><path d="M1.5 4.5 H4.5 L6 2.5 H10 L11.5 4.5 H14.5 V13.5 H1.5 Z" fill="#e6e6e6"/><circle cx="8" cy="8.5" r="3" fill="none" stroke="#282828" stroke-width="1.2"/></svg>
<svg class="a" style="left:1875px;top:117.5px;" width="14" height="11" viewBox="0 0 14 11"><path d="M1 5.5 C3.5 1 10.5 1 13 5.5 C10.5 10 3.5 10 1 5.5 Z" fill="none" stroke="#e6e6e6" stroke-width="1.5"/><circle cx="7" cy="5.5" r="2.2" fill="#e6e6e6"/></svg>
<svg class="a" style="left:1895px;top:115px;" width="16" height="15" viewBox="0 0 16 15"><path d="M1.5 4.5 H4.5 L6 2.5 H10 L11.5 4.5 H14.5 V13.5 H1.5 Z" fill="#e6e6e6"/><circle cx="8" cy="8.5" r="3" fill="none" stroke="#282828" stroke-width="1.2"/></svg>
<svg class="a" style="left:1875px;top:137.5px;" width="14" height="11" viewBox="0 0 14 11"><path d="M1 5.5 C3.5 1 10.5 1 13 5.5 C10.5 10 3.5 10 1 5.5 Z" fill="none" stroke="#e6e6e6" stroke-width="1.5"/><circle cx="7" cy="5.5" r="2.2" fill="#e6e6e6"/></svg>
<svg class="a" style="left:1895px;top:135px;" width="16" height="15" viewBox="0 0 16 15"><path d="M1.5 4.5 H4.5 L6 2.5 H10 L11.5 4.5 H14.5 V13.5 H1.5 Z" fill="#e6e6e6"/><circle cx="8" cy="8.5" r="3" fill="none" stroke="#282828" stroke-width="1.2"/></svg>
<svg class="a" style="left:1875px;top:157.5px;" width="14" height="11" viewBox="0 0 14 11"><path d="M1 5.5 C3.5 1 10.5 1 13 5.5 C10.5 10 3.5 10 1 5.5 Z" fill="none" stroke="#e6e6e6" stroke-width="1.5"/><circle cx="7" cy="5.5" r="2.2" fill="#e6e6e6"/></svg>
<svg class="a" style="left:1895px;top:155px;" width="16" height="15" viewBox="0 0 16 15"><path d="M1.5 4.5 H4.5 L6 2.5 H10 L11.5 4.5 H14.5 V13.5 H1.5 Z" fill="#e6e6e6"/><circle cx="8" cy="8.5" r="3" fill="none" stroke="#282828" stroke-width="1.2"/></svg>
<svg class="a" style="left:1873px;top:178px;" width="16" height="12" viewBox="0 0 16 12"><path d="M1.5 4 C4.5 8.5 11.5 8.5 14.5 4" fill="none" stroke="#bdbdbd" stroke-width="1.1"/></svg>
<svg class="a" style="left:1895px;top:175px;" width="16" height="15" viewBox="0 0 16 15"><path d="M1.5 4.5 H4.5 L6 2.5 H10 L11.5 4.5 H14.5 V13.5 H1.5 Z" fill="none" stroke="#bdbdbd" stroke-width="1.1"/><path d="M6 6.5 L10 10.5 M10 6.5 L6 10.5" stroke="#bdbdbd" stroke-width="1.1"/></svg>
<div class="a" style="left:1588px;top:198px;width:331px;height:797px;background:#303030;border-radius:6px;"></div>
<div class="a" style="left:1588px;top:223px;width:28px;height:772px;background:#1d1d1d;border-radius:0 0 0 6px;"></div>
<div class="a" style="left:1596px;top:200px;width:32px;height:20px;background:#282828;border-radius:4px;box-sizing:border-box;border:1px solid #3a3a3a;"></div>
<svg class="a" style="left:1599px;top:202px;" width="18" height="16" viewBox="0 0 18 16"><rect x="1.5" y="2" width="12" height="5" rx="2.5" fill="#e6e6e6"/><rect x="7" y="3.2" width="5.3" height="2.6" rx="1.3" fill="#282828"/><rect x="1.5" y="9" width="12" height="5" rx="2.5" fill="#e6e6e6"/><rect x="8.5" y="10.2" width="3.8" height="2.6" rx="1.3" fill="#282828"/></svg>
<svg class="a" style="left:1617px;top:207.5px;" width="8" height="6" viewBox="0 0 8 6"><path d="M1 1.5 L4 4.5 L7 1.5" fill="none" stroke="#d0d0d0" stroke-width="1.2"/></svg>
<div class="a" style="left:1700px;top:201px;width:110px;height:19px;background:#1d1d1d;border-radius:4px;box-sizing:border-box;border:1px solid #2a2a2a;"></div>
<svg class="a" style="left:1703px;top:203px;" width="14" height="14" viewBox="0 0 14 14"><circle cx="8.5" cy="5.5" r="4" fill="none" stroke="#d8d8d8" stroke-width="1.2"/><path d="M5.5 8.5 L1.5 12.5" stroke="#d8d8d8" stroke-width="1.3"/></svg>
<div class="a" style="left:1892px;top:201px;width:19px;height:19px;background:#282828;border-radius:4px;box-sizing:border-box;border:1px solid #3a3a3a;"></div>
<svg class="a" style="left:1897.5px;top:207.5px;" width="8" height="6" viewBox="0 0 8 6"><path d="M1 1.5 L4 4.5 L7 1.5" fill="none" stroke="#e6e6e6" stroke-width="1.2"/></svg>
<div class="a" style="left:1590px;top:380px;width:26px;height:26px;background:#303030;border-radius:4px 0 0 4px;"></div>
<div class="a" style="left:1594px;top:259px;width:20px;height:1px;background:#262626;"></div>
<div class="a" style="left:1594px;top:411px;width:20px;height:1px;background:#262626;"></div>
<div class="a" style="left:1594px;top:650px;width:20px;height:1px;background:#262626;"></div>
<svg class="a" style="left:1595px;top:237px;" width="16" height="16" viewBox="0 0 16 16"><path d="M5 2 V9" stroke="#bdbdbd" stroke-width="1.2"/><rect x="3" y="9" width="4" height="6" rx="2" fill="#bdbdbd"/><path d="M10 2 V4.5 A2.5 2.5 0 0 0 14 4.5 V2 M12 6 V15" fill="none" stroke="#bdbdbd" stroke-width="1.6"/></svg>
<svg class="a" style="left:1595px;top:272px;" width="16" height="16" viewBox="0 0 16 16"><path d="M1.5 5 H5 L6 3 H10 L11 5 H14.5 V14 H1.5 Z" fill="none" stroke="#bdbdbd" stroke-width="1.3"/><path d="M4 8 H10 M4 10 H10 M4 12 H10 M12 8 V12" stroke="#bdbdbd" stroke-width="1"/></svg>
<svg class="a" style="left:1595px;top:300px;" width="16" height="16" viewBox="0 0 16 16"><rect x="1.5" y="2" width="13" height="4" fill="#bdbdbd"/><rect x="3.5" y="6" width="9" height="8" fill="#bdbdbd"/><path d="M5 12.5 L7.5 9 L9 11 L10 10 L11 12.5 Z" fill="#1d1d1d"/></svg>
<svg class="a" style="left:1595px;top:328.5px;" width="16" height="16" viewBox="0 0 16 16"><path d="M2.5 5 V14.5 H12 M4.5 3.5 V12.5 H13.5" fill="none" stroke="#bdbdbd" stroke-width="1"/><rect x="6" y="1.5" width="9" height="9" fill="#bdbdbd"/><path d="M7 9.5 L9.5 6 L11 8 L12.5 6.5 L14 9.5 Z" fill="#1d1d1d"/></svg>
<svg class="a" style="left:1595px;top:356.6px;" width="16" height="16" viewBox="0 0 16 16"><path d="M5 3 L1.5 10 A3.5 3.5 0 0 0 8.5 10 Z" fill="#bdbdbd"/><circle cx="12" cy="4" r="1.8" fill="#bdbdbd"/><circle cx="11" cy="11.5" r="3" fill="#1d1d1d" stroke="#bdbdbd" stroke-width="1.2"/></svg>
<svg class="a" style="left:1595px;top:384.7px;" width="16" height="16" viewBox="0 0 16 16"><circle cx="8" cy="8" r="5.8" fill="none" stroke="#d66a78" stroke-width="1.2"/><path d="M2.8 6.8 C3.5 4 5.5 2.6 7.6 2.5 L8.3 3.6 L7.3 4.8 L8.2 6.2 L6.2 7.2 L6.6 8.8 L4.6 9.4 L3 8.6 Z" fill="#d66a78"/><path d="M6.8 10.2 L9.6 8.8 L11.8 10.2 L10.6 12.8 L8.6 13.4 L7.6 12 Z" fill="#d66a78"/><path d="M1 15 L3.6 12.4 M12.4 3.6 L15 1" stroke="#d66a78" stroke-width="1.2"/></svg>
<svg class="a" style="left:1595px;top:421.5px;" width="16" height="16" viewBox="0 0 16 16"><rect x="2" y="2" width="12" height="3" fill="#e0e0e0"/><path d="M3 6 H13 V14 H3 Z" fill="none" stroke="#e0e0e0" stroke-width="1.3"/><rect x="6" y="7.5" width="4" height="1.5" fill="#e0e0e0"/></svg>
<svg class="a" style="left:1595px;top:457px;" width="16" height="16" viewBox="0 0 16 16"><path d="M1.5 4.5 V1.5 H4.5 M11.5 1.5 H14.5 V4.5 M14.5 11.5 V14.5 H11.5 M4.5 14.5 H1.5 V11.5" fill="none" stroke="#d0803a" stroke-width="1"/><rect x="4" y="4" width="8" height="8" fill="#d8863e"/></svg>
<svg class="a" style="left:1595px;top:484.6px;" width="16" height="16" viewBox="0 0 16 16"><path d="M2.5 13.5 L8 8 M9 3 A3.5 3.5 0 0 0 13.5 7.5 L12 5.5 L11 4.5 Z" fill="none" stroke="#5a8ad8" stroke-width="2.6" stroke-linecap="round"/></svg>
<svg class="a" style="left:1595px;top:512.8px;" width="16" height="16" viewBox="0 0 16 16"><path d="M4 3.5 V12.5 M4 3.5 L12.5 12.5 M4 3.5 H12.5" stroke="#5a8ad8" stroke-width="1.2"/><circle cx="4" cy="3.5" r="2.3" fill="#5a8ad8"/><circle cx="12.5" cy="3.5" r="1.5" fill="#5a8ad8"/><circle cx="4" cy="12.5" r="1.5" fill="#5a8ad8"/><circle cx="12.5" cy="12.5" r="1.5" fill="#5a8ad8"/></svg>
<svg class="a" style="left:1595px;top:541px;" width="16" height="16" viewBox="0 0 16 16"><path d="M12.5 11 A5.5 5.5 0 1 1 7 2.5" fill="none" stroke="#5a8ad8" stroke-width="1.2"/><circle cx="7.5" cy="8.5" r="2.5" fill="#5a8ad8"/><circle cx="12.5" cy="3.5" r="1.8" fill="#5a8ad8"/></svg>
<svg class="a" style="left:1595px;top:569px;" width="16" height="16" viewBox="0 0 16 16"><path d="M3 12 A4 4 0 0 1 5 6 L11 2.5 A3 3 0 0 1 14 7 L10 13 A4 4 0 0 1 3 12 Z" fill="none" stroke="#5a8ad8" stroke-width="1.2"/><circle cx="6.5" cy="10" r="2.5" fill="none" stroke="#5a8ad8" stroke-width="1.2"/><circle cx="6.5" cy="10" r="1" fill="#5a8ad8"/></svg>
<svg class="a" style="left:1595px;top:597px;" width="16" height="16" viewBox="0 0 16 16"><path d="M3.5 3.5 H12.5 L8 12.5 Z" fill="none" stroke="#2fb394" stroke-width="1.2"/><rect x="1.5" y="1.5" width="3.5" height="3.5" fill="none" stroke="#2fb394" stroke-width="1.1"/><rect x="11" y="1.5" width="3.5" height="3.5" fill="none" stroke="#2fb394" stroke-width="1.1"/><rect x="6.2" y="11" width="3.5" height="3.5" fill="none" stroke="#2fb394" stroke-width="1.1"/></svg>
<svg class="a" style="left:1595px;top:624px;" width="16" height="16" viewBox="0 0 16 16"><circle cx="8" cy="8" r="6.3" fill="#c85a5a"/><path d="M8 8 H14.3 A6.3 6.3 0 0 1 8 14.3 Z" fill="#1d1d1d"/><path d="M8 8 V1.7 A6.3 6.3 0 0 0 1.7 8 Z" fill="#e08a8a"/></svg>
<svg class="a" style="left:1595px;top:657.6px;" width="16" height="16" viewBox="0 0 16 16"><rect x="1.5" y="1.5" width="13" height="13" fill="#c85a5a"/><rect x="1.5" y="4.1" width="2.6" height="2.6" fill="#1d1d1d"/><rect x="1.5" y="9.3" width="2.6" height="2.6" fill="#1d1d1d"/><rect x="4.1" y="1.5" width="2.6" height="2.6" fill="#1d1d1d"/><rect x="4.1" y="6.7" width="2.6" height="2.6" fill="#1d1d1d"/><rect x="4.1" y="11.9" width="2.6" height="2.6" fill="#1d1d1d"/><rect x="6.7" y="4.1" width="2.6" height="2.6" fill="#1d1d1d"/><rect x="6.7" y="9.3" width="2.6" height="2.6" fill="#1d1d1d"/><rect x="9.3" y="1.5" width="2.6" height="2.6" fill="#1d1d1d"/><rect x="9.3" y="6.7" width="2.6" height="2.6" fill="#1d1d1d"/><rect x="9.3" y="11.9" width="2.6" height="2.6" fill="#1d1d1d"/><rect x="11.9" y="4.1" width="2.6" height="2.6" fill="#1d1d1d"/><rect x="11.9" y="9.3" width="2.6" height="2.6" fill="#1d1d1d"/></svg>
<svg class="a" style="left:1626px;top:233px;" width="16" height="16" viewBox="0 0 16 16"><path d="M5 3 L1.5 10 A3.5 3.5 0 0 0 8.5 10 Z" fill="#d8d8d8"/><circle cx="12" cy="4" r="1.8" fill="#d8d8d8"/><circle cx="11" cy="11.5" r="3" fill="#303030" stroke="#d8d8d8" stroke-width="1.2"/></svg>
<div class="t" style="left:1650px;top:232.5px;font-size:11.2px;line-height:17px;color:#e6e6e6;">Scene</div>
<svg class="a" style="left:1696.5px;top:236.5px;" width="7.0" height="9.0" viewBox="0 0 7.0 9.0"><path d="M2.1 1 L5.25 4.5 L2.1 8.0" fill="none" stroke="#d0d0d0" stroke-width="1.2"/></svg>
<svg class="a" style="left:1712px;top:233px;" width="16" height="16" viewBox="0 0 16 16"><circle cx="8" cy="8" r="5.8" fill="none" stroke="#e0e0e0" stroke-width="1.2"/><path d="M2.8 6.8 C3.5 4 5.5 2.6 7.6 2.5 L8.3 3.6 L7.3 4.8 L8.2 6.2 L6.2 7.2 L6.6 8.8 L4.6 9.4 L3 8.6 Z" fill="#e0e0e0"/><path d="M6.8 10.2 L9.6 8.8 L11.8 10.2 L10.6 12.8 L8.6 13.4 L7.6 12 Z" fill="#e0e0e0"/><path d="M1 15 L3.6 12.4 M12.4 3.6 L15 1" stroke="#e0e0e0" stroke-width="1.2"/></svg>
<div class="t" style="left:1736px;top:232.5px;font-size:11.2px;line-height:17px;color:#e6e6e6;">World</div>
<svg class="a" style="left:1894px;top:233px;" width="16" height="16" viewBox="0 0 16 16"><path d="M9 2 L14 7 L12 8 L9.5 10.5 L9.5 13 L3 6.5 L5.5 6.5 L8 4 Z M6 10 L2 14" fill="none" stroke="#a8a8a8" stroke-width="1.1"/></svg>
<div class="a" style="left:1625px;top:268px;width:286px;height:18px;background:#282828;border-radius:4px;"></div>
<div class="a" style="left:1655px;top:268px;width:197px;height:18px;background:#1d1d1d;"></div>
<div class="a" style="left:1852px;top:268px;width:59px;height:18px;background:#545454;border-radius:0 4px 4px 0;"></div>
<div class="a" style="left:1871px;top:268px;width:1px;height:18px;background:#3a3a3a;"></div>
<div class="a" style="left:1891px;top:268px;width:1px;height:18px;background:#3a3a3a;"></div>
<svg class="a" style="left:1629px;top:269px;" width="16" height="16" viewBox="0 0 16 16"><circle cx="8" cy="8" r="5.8" fill="none" stroke="#e0e0e0" stroke-width="1.2"/><path d="M2.8 6.8 C3.5 4 5.5 2.6 7.6 2.5 L8.3 3.6 L7.3 4.8 L8.2 6.2 L6.2 7.2 L6.6 8.8 L4.6 9.4 L3 8.6 Z" fill="#e0e0e0"/><path d="M6.8 10.2 L9.6 8.8 L11.8 10.2 L10.6 12.8 L8.6 13.4 L7.6 12 Z" fill="#e0e0e0"/><path d="M1 15 L3.6 12.4 M12.4 3.6 L15 1" stroke="#e0e0e0" stroke-width="1.2"/></svg>
<svg class="a" style="left:1645px;top:274.5px;" width="8" height="6" viewBox="0 0 8 6"><path d="M1 1.5 L4 4.5 L7 1.5" fill="none" stroke="#d0d0d0" stroke-width="1.2"/></svg>
<div class="t" style="left:1663px;top:269.0px;font-size:11.2px;line-height:17px;color:#e6e6e6;">World</div>
<svg class="a" style="left:1854.5px;top:270px;" width="14" height="15" viewBox="0 0 14 15"><path d="M7 1.5 L12.5 3.5 V8 C12.5 11 10 13 7 14 C4 13 1.5 11 1.5 8 V3.5 Z" fill="none" stroke="#9a9a9a" stroke-width="1.1"/></svg>
<svg class="a" style="left:1874px;top:269px;" width="16" height="16" viewBox="0 0 16 16"><path d="M5.6 1.7 H11.5 L14.4 4.6 V10.4 H5.6 Z" fill="none" stroke="#d8d8d8" stroke-width="1.2"/><path d="M11.5 1.7 L14.4 4.6 H11.5 Z" fill="#d8d8d8"/><path d="M4.6 4.6 H1.6 V14.4 H11.3 V11.4" fill="none" stroke="#d8d8d8" stroke-width="1.2"/></svg>
<svg class="a" style="left:1896px;top:272.5px;" width="10" height="10" viewBox="0 0 10 10"><path d="M1 1 L9 9 M9 1 L1 9" stroke="#d0d0d0" stroke-width="1.3"/></svg>
<div class="a" style="left:1624px;top:297px;width:288px;height:157px;background:#3d3d3d;border-radius:4px;"></div>
<svg class="a" style="left:1631px;top:305px;" width="10" height="10" viewBox="0 0 10 10"><path d="M1 3 L5 7 L9 3" fill="none" stroke="#cfcfcf" stroke-width="1.1"/></svg>
<div class="t" style="left:1646px;top:301.5px;font-size:11.2px;line-height:17px;color:#e6e6e6;">Surface</div>
<svg class="a" style="left:1895px;top:307px;" width="10" height="6" viewBox="0 0 10 6"><rect x="0.0" y="0" width="1.3" height="1.3" fill="#222222"/><rect x="0.0" y="3" width="1.3" height="1.3" fill="#222222"/><rect x="2.6" y="0" width="1.3" height="1.3" fill="#222222"/><rect x="2.6" y="3" width="1.3" height="1.3" fill="#222222"/><rect x="5.2" y="0" width="1.3" height="1.3" fill="#222222"/><rect x="5.2" y="3" width="1.3" height="1.3" fill="#222222"/><rect x="7.800000000000001" y="0" width="1.3" height="1.3" fill="#222222"/><rect x="7.800000000000001" y="3" width="1.3" height="1.3" fill="#222222"/></svg>
<div class="a" style="left:1633px;top:331px;width:270px;height:18px;background:#4772b3;border-radius:4px;"></div>
<svg class="a" style="left:1636px;top:332px;" width="16" height="16" viewBox="0 0 16 16"><rect x="2" y="2" width="8" height="4.5" rx="1.5" fill="#fff"/><rect x="2" y="9.5" width="8" height="4.5" rx="1.5" fill="#fff"/><path d="M11 3 A5 5 0 0 1 11 13" fill="none" stroke="#fff" stroke-width="1.1"/></svg>
<div class="t" style="left:1576.0px;top:331.5px;width:400px;text-align:center;font-size:11.2px;line-height:17px;color:#ffffff;">Use Nodes</div>
<div class="t" style="right:192px;top:367.5px;font-size:11.2px;line-height:17px;color:#e6e6e6;">Surface</div>
<div class="a" style="left:1738px;top:367px;width:145px;height:18px;background:#282828;border-radius:4px;"></div>
<svg class="a" style="left:1743px;top:372px;" width="8" height="8" viewBox="0 0 8 8"><circle cx="4" cy="4" r="3" fill="#63c763"/></svg>
<div class="t" style="left:1760px;top:367.5px;font-size:11.2px;line-height:17px;color:#e6e6e6;">Background</div>
<div class="t" style="right:192px;top:403.5px;font-size:11.2px;line-height:17px;color:#e6e6e6;">Color</div>
<div class="a" style="left:1738px;top:403px;width:145px;height:18px;background:#282828;border-radius:4px;"></div>
<div class="a" style="left:1756px;top:403px;width:127px;height:18px;background:#0a0a0a;border-radius:0 4px 4px 0;"></div>
<svg class="a" style="left:1743px;top:408px;" width="8" height="8" viewBox="0 0 8 8"><circle cx="4" cy="4" r="3" fill="#c7c729"/></svg>
<svg class="a" style="left:1890px;top:409px;" width="6" height="6" viewBox="0 0 6 6"><circle cx="3" cy="3" r="2" fill="#e0e0e0"/></svg>
<div class="t" style="right:192px;top:428.5px;font-size:11.2px;line-height:17px;color:#e6e6e6;">Strength</div>
<div class="a" style="left:1738px;top:428px;width:145px;height:18px;background:#282828;border-radius:4px;"></div>
<div class="a" style="left:1756px;top:428px;width:127px;height:18px;background:#545454;border-radius:0 4px 4px 0;"></div>
<svg class="a" style="left:1743px;top:433px;" width="8" height="8" viewBox="0 0 8 8"><circle cx="4" cy="4" r="3" fill="#a1a1a1"/></svg>
<div class="t" style="left:1619.5px;top:428.5px;width:400px;text-align:center;font-size:11.2px;line-height:17px;color:#e6e6e6;">1.000</div>
<svg class="a" style="left:1890px;top:434px;" width="6" height="6" viewBox="0 0 6 6"><circle cx="3" cy="3" r="2" fill="#e0e0e0"/></svg>
<div class="a" style="left:1624px;top:457px;width:288px;height:25px;background:#3d3d3d;border-radius:4px;"></div>
<svg class="a" style="left:1632.7px;top:465.2px;" width="6.6" height="8.6" viewBox="0 0 6.6 8.6"><path d="M1.9799999999999998 1 L4.949999999999999 4.3 L1.9799999999999998 7.6" fill="none" stroke="#cfcfcf" stroke-width="1.2"/></svg>
<div class="t" style="left:1646px;top:461.0px;font-size:11.2px;line-height:17px;color:#e6e6e6;">Volume</div>
<svg class="a" style="left:1895px;top:467px;" width="10" height="6" viewBox="0 0 10 6"><rect x="0.0" y="0" width="1.3" height="1.3" fill="#222222"/><rect x="0.0" y="3" width="1.3" height="1.3" fill="#222222"/><rect x="2.6" y="0" width="1.3" height="1.3" fill="#222222"/><rect x="2.6" y="3" width="1.3" height="1.3" fill="#222222"/><rect x="5.2" y="0" width="1.3" height="1.3" fill="#222222"/><rect x="5.2" y="3" width="1.3" height="1.3" fill="#222222"/><rect x="7.800000000000001" y="0" width="1.3" height="1.3" fill="#222222"/><rect x="7.800000000000001" y="3" width="1.3" height="1.3" fill="#222222"/></svg>
<div class="a" style="left:1624px;top:484px;width:288px;height:25px;background:#3d3d3d;border-radius:4px;"></div>
<svg class="a" style="left:1632.7px;top:492.2px;" width="6.6" height="8.6" viewBox="0 0 6.6 8.6"><path d="M1.9799999999999998 1 L4.949999999999999 4.3 L1.9799999999999998 7.6" fill="none" stroke="#cfcfcf" stroke-width="1.2"/></svg>
<div class="t" style="left:1646px;top:488.0px;font-size:11.2px;line-height:17px;color:#e6e6e6;">Viewport Display</div>
<svg class="a" style="left:1895px;top:494px;" width="10" height="6" viewBox="0 0 10 6"><rect x="0.0" y="0" width="1.3" height="1.3" fill="#222222"/><rect x="0.0" y="3" width="1.3" height="1.3" fill="#222222"/><rect x="2.6" y="0" width="1.3" height="1.3" fill="#222222"/><rect x="2.6" y="3" width="1.3" height="1.3" fill="#222222"/><rect x="5.2" y="0" width="1.3" height="1.3" fill="#222222"/><rect x="5.2" y="3" width="1.3" height="1.3" fill="#222222"/><rect x="7.800000000000001" y="0" width="1.3" height="1.3" fill="#222222"/><rect x="7.800000000000001" y="3" width="1.3" height="1.3" fill="#222222"/></svg>
<div class="a" style="left:1624px;top:511px;width:288px;height:25px;background:#3d3d3d;border-radius:4px;"></div>
<svg class="a" style="left:1632.7px;top:519.2px;" width="6.6" height="8.6" viewBox="0 0 6.6 8.6"><path d="M1.9799999999999998 1 L4.949999999999999 4.3 L1.9799999999999998 7.6" fill="none" stroke="#cfcfcf" stroke-width="1.2"/></svg>
<div class="t" style="left:1646px;top:515.0px;font-size:11.2px;line-height:17px;color:#e6e6e6;">Custom Properties</div>
<svg class="a" style="left:1895px;top:521px;" width="10" height="6" viewBox="0 0 10 6"><rect x="0.0" y="0" width="1.3" height="1.3" fill="#222222"/><rect x="0.0" y="3" width="1.3" height="1.3" fill="#222222"/><rect x="2.6" y="0" width="1.3" height="1.3" fill="#222222"/><rect x="2.6" y="3" width="1.3" height="1.3" fill="#222222"/><rect x="5.2" y="0" width="1.3" height="1.3" fill="#222222"/><rect x="5.2" y="3" width="1.3" height="1.3" fill="#222222"/><rect x="7.800000000000001" y="0" width="1.3" height="1.3" fill="#222222"/><rect x="7.800000000000001" y="3" width="1.3" height="1.3" fill="#222222"/></svg>
<div class="a" style="left:1px;top:578px;width:1584px;height:417px;background:#1d1d1d;border-radius:6px;overflow:hidden"><svg width="1584" height="417" viewBox="1 578 1584 417" style="position:absolute;left:0;top:0"><defs><pattern id="pmin" patternUnits="userSpaceOnUse" x="38.8" y="603.6" width="7.9879999999999995" height="7.9879999999999995"><rect width="1.2" height="1.2" fill="#212121"/></pattern><pattern id="pmaj" patternUnits="userSpaceOnUse" x="38.1" y="602.9000000000001" width="39.94" height="39.94"><rect width="2.6" height="2.6" fill="#2a2a2a"/></pattern></defs><rect x="1" y="578" width="1584" height="417" fill="url(#pmin)"/><rect x="1" y="578" width="1584" height="417" fill="url(#pmaj)"/></svg></div>
<div class="a" style="left:1px;top:578px;width:1584px;height:25px;background:#1d1d1d;border-radius:6px 6px 0 0;"></div>
<svg class="a" style="left:0px;top:578px;" width="1586" height="418" viewBox="0 0 1586 418"><g transform="translate(0,-578)"><path d="M340 772.6 C356.4 772.6 364.6 768.3 381 768.3" fill="none" stroke="#141414" stroke-width="3.2" stroke-opacity="0.6"/><path d="M340 772.6 C356.4 772.6 364.6 768.3 381 768.3" fill="none" stroke="#6363c7" stroke-width="2"/><path d="M340 772.6 C357.2 772.6 365.8 836.7 383 836.7" fill="none" stroke="#141414" stroke-width="3.2" stroke-opacity="0.6"/><path d="M340 772.6 C357.2 772.6 365.8 836.7 383 836.7" fill="none" stroke="#6363c7" stroke-width="2"/><path d="M436 740.9 C449.2 740.9 455.8 750.2 469 750.2" fill="none" stroke="#141414" stroke-width="3.2" stroke-opacity="0.6"/><path d="M436 740.9 C449.2 740.9 455.8 750.2 469 750.2" fill="none" stroke="#b0b0b0" stroke-width="2"/><path d="M437 818 C448.2 818 453.8 838.3 465 838.3" fill="none" stroke="#141414" stroke-width="3.2" stroke-opacity="0.6"/><path d="M437 818 C448.2 818 453.8 838.3 465 838.3" fill="none" stroke="#b0b0b0" stroke-width="2"/><path d="M523 718.3 C568.2 718.3 590.8 782.7 636 782.7" fill="none" stroke="#141414" stroke-width="3.2" stroke-opacity="0.6"/><path d="M523 718.3 C568.2 718.3 590.8 782.7 636 782.7" fill="none" stroke="#b0b0b0" stroke-width="2"/><path d="M519 806.4 C565.8 806.4 589.2 773.4 636 773.4" fill="none" stroke="#141414" stroke-width="3.2" stroke-opacity="0.6"/><path d="M519 806.4 C565.8 806.4 589.2 773.4 636 773.4" fill="none" stroke="#b0b0b0" stroke-width="2"/><path d="M690 741.5 C709.6 741.5 719.4 734.4 739 734.4" fill="none" stroke="#141414" stroke-width="3.2" stroke-opacity="0.6"/><path d="M690 741.5 C709.6 741.5 719.4 734.4 739 734.4" fill="none" stroke="#b0b0b0" stroke-width="2"/><path d="M834 669.5 C895.6 669.5 926.4 727.3 988 727.3" fill="none" stroke="#141414" stroke-width="3.2" stroke-opacity="0.6"/><path d="M834 669.5 C895.6 669.5 926.4 727.3 988 727.3" fill="none" stroke="#c7c729" stroke-width="2"/><path d="M834 669.5 C895.6 669.5 926.4 894.7 988 894.7" fill="none" stroke="#141414" stroke-width="3.2" stroke-opacity="0.6"/><path d="M834 669.5 C895.6 669.5 926.4 894.7 988 894.7" fill="none" stroke="#c7c729" stroke-width="2"/><path d="M834 678.6 C895.6 678.6 926.4 912.6 988 912.6" fill="none" stroke="#141414" stroke-width="3.2" stroke-opacity="0.6"/><path d="M834 678.6 C895.6 678.6 926.4 912.6 988 912.6" fill="none" stroke="#b0b0b0" stroke-width="2"/><path d="M1083 695.4 C1096.6 695.4 1103.4 706.1 1117 706.1" fill="none" stroke="#141414" stroke-width="3.2" stroke-opacity="0.6"/><path d="M1083 695.4 C1096.6 695.4 1103.4 706.1 1117 706.1" fill="none" stroke="#63c763" stroke-width="2"/></g></svg>
<div class="a" style="left:286px;top:743.5px;width:56px;height:95px;background:rgba(0,0,0,0.45);border-radius:3px;filter:blur(1.5px);"></div>
<div class="a" style="left:285px;top:742px;width:55px;height:94px;background:#303030;border-radius:2.5px;"></div>
<div class="a" style="left:285px;top:742px;width:55px;height:8px;background:#83314a;border-radius:2.5px 2.5px 0 0;"></div>
<svg class="a" style="left:288px;top:744.5px;" width="4" height="3" viewBox="0 0 4 3"><path d="M0.5 0.5 L2 2.5 L3.5 0.5" fill="none" stroke="#ddd" stroke-width="0.7"/></svg>
<div class="t" style="left:295px;top:741.0px;font-size:4.4px;line-height:10px;color:#d9d9d9;letter-spacing:-0.05px;">Texture Coordinate</div>
<div class="t" style="right:1584px;top:750.7px;font-size:4.4px;line-height:10px;color:#d9d9d9;letter-spacing:-0.05px;">Generated</div>
<svg class="a" style="left:337.8px;top:753.5px;" width="4.4" height="4.4" viewBox="0 0 4.4 4.4"><circle cx="2.2" cy="2.2" r="1.7" fill="#6363c7" stroke="#111" stroke-width="0.5"/></svg>
<div class="t" style="right:1584px;top:759.5px;font-size:4.4px;line-height:10px;color:#d9d9d9;letter-spacing:-0.05px;">Normal</div>
<svg class="a" style="left:337.8px;top:762.3px;" width="4.4" height="4.4" viewBox="0 0 4.4 4.4"><circle cx="2.2" cy="2.2" r="1.7" fill="#6363c7" stroke="#111" stroke-width="0.5"/></svg>
<div class="t" style="right:1584px;top:767.6px;font-size:4.4px;line-height:10px;color:#d9d9d9;letter-spacing:-0.05px;">UV</div>
<svg class="a" style="left:337.8px;top:770.4px;" width="4.4" height="4.4" viewBox="0 0 4.4 4.4"><circle cx="2.2" cy="2.2" r="1.7" fill="#6363c7" stroke="#111" stroke-width="0.5"/></svg>
<div class="t" style="right:1584px;top:776.6px;font-size:4.4px;line-height:10px;color:#d9d9d9;letter-spacing:-0.05px;">Object</div>
<svg class="a" style="left:337.8px;top:779.4px;" width="4.4" height="4.4" viewBox="0 0 4.4 4.4"><circle cx="2.2" cy="2.2" r="1.7" fill="#6363c7" stroke="#111" stroke-width="0.5"/></svg>
<div class="t" style="right:1584px;top:785.5px;font-size:4.4px;line-height:10px;color:#d9d9d9;letter-spacing:-0.05px;">Camera</div>
<svg class="a" style="left:337.8px;top:788.3px;" width="4.4" height="4.4" viewBox="0 0 4.4 4.4"><circle cx="2.2" cy="2.2" r="1.7" fill="#6363c7" stroke="#111" stroke-width="0.5"/></svg>
<div class="t" style="right:1584px;top:794.4px;font-size:4.4px;line-height:10px;color:#d9d9d9;letter-spacing:-0.05px;">Window</div>
<svg class="a" style="left:337.8px;top:797.1999999999999px;" width="4.4" height="4.4" viewBox="0 0 4.4 4.4"><circle cx="2.2" cy="2.2" r="1.7" fill="#6363c7" stroke="#111" stroke-width="0.5"/></svg>
<div class="t" style="right:1584px;top:803.3px;font-size:4.4px;line-height:10px;color:#d9d9d9;letter-spacing:-0.05px;">Reflection</div>
<svg class="a" style="left:337.8px;top:806.0999999999999px;" width="4.4" height="4.4" viewBox="0 0 4.4 4.4"><circle cx="2.2" cy="2.2" r="1.7" fill="#6363c7" stroke="#111" stroke-width="0.5"/></svg>
<div class="t" style="left:289px;top:814.5px;font-size:4.4px;line-height:10px;color:#d9d9d9;letter-spacing:-0.05px;">Object</div>
<div class="a" style="left:304px;top:815.5px;width:30px;height:8px;background:#1d1d1d;border-radius:1.5px;box-sizing:border-box;border:0.5px solid #3a3a3a;"></div>
<div class="a" style="left:307px;top:817.5px;width:3px;height:3.5px;background:#e6e6e6;"></div>
<div class="a" style="left:289px;top:826.8px;width:5.4px;height:5.4px;background:#545454;border-radius:1px;"></div>
<div class="t" style="left:297px;top:824.5px;font-size:4.4px;line-height:10px;color:#d9d9d9;letter-spacing:-0.05px;">From Instancer</div>
<div class="a" style="left:382px;top:729.2px;width:56px;height:47.299999999999955px;background:rgba(0,0,0,0.45);border-radius:3px;filter:blur(1.5px);"></div>
<div class="a" style="left:381px;top:727.7px;width:55px;height:46.299999999999955px;background:#303030;border-radius:2.5px;"></div>
<div class="a" style="left:381px;top:727.7px;width:55px;height:7.2999999999999545px;background:#246283;border-radius:2.5px 2.5px 0 0;"></div>
<svg class="a" style="left:384px;top:729.85px;" width="4" height="3" viewBox="0 0 4 3"><path d="M0.5 0.5 L2 2.5 L3.5 0.5" fill="none" stroke="#ddd" stroke-width="0.7"/></svg>
<div class="t" style="left:391px;top:726.35px;font-size:4.4px;line-height:10px;color:#d9d9d9;letter-spacing:-0.05px;">Separate XYZ</div>
<div class="t" style="right:1489px;top:735.9px;font-size:4.4px;line-height:10px;color:#d9d9d9;letter-spacing:-0.05px;">X</div>
<svg class="a" style="left:433.8px;top:738.6999999999999px;" width="4.4" height="4.4" viewBox="0 0 4.4 4.4"><circle cx="2.2" cy="2.2" r="1.7" fill="#a1a1a1" stroke="#111" stroke-width="0.5"/></svg>
<div class="t" style="right:1489px;top:744.6px;font-size:4.4px;line-height:10px;color:#d9d9d9;letter-spacing:-0.05px;">Y</div>
<svg class="a" style="left:433.8px;top:747.4px;" width="4.4" height="4.4" viewBox="0 0 4.4 4.4"><circle cx="2.2" cy="2.2" r="1.7" fill="#a1a1a1" stroke="#111" stroke-width="0.5"/></svg>
<div class="t" style="right:1489px;top:753.5px;font-size:4.4px;line-height:10px;color:#d9d9d9;letter-spacing:-0.05px;">Z</div>
<svg class="a" style="left:433.8px;top:756.3px;" width="4.4" height="4.4" viewBox="0 0 4.4 4.4"><circle cx="2.2" cy="2.2" r="1.7" fill="#a1a1a1" stroke="#111" stroke-width="0.5"/></svg>
<div class="t" style="left:386px;top:763.3px;font-size:4.4px;line-height:10px;color:#d9d9d9;letter-spacing:-0.05px;">Vector</div>
<svg class="a" style="left:378.8px;top:766.0999999999999px;" width="4.4" height="4.4" viewBox="0 0 4.4 4.4"><circle cx="2.2" cy="2.2" r="1.7" fill="#6363c7" stroke="#111" stroke-width="0.5"/></svg>
<div class="a" style="left:384px;top:797.5px;width:55px;height:47.700000000000045px;background:rgba(0,0,0,0.45);border-radius:3px;filter:blur(1.5px);"></div>
<div class="a" style="left:383px;top:796px;width:54px;height:46.700000000000045px;background:#303030;border-radius:2.5px;"></div>
<div class="a" style="left:383px;top:796px;width:54px;height:8px;background:#246283;border-radius:2.5px 2.5px 0 0;"></div>
<svg class="a" style="left:386px;top:798.5px;" width="4" height="3" viewBox="0 0 4 3"><path d="M0.5 0.5 L2 2.5 L3.5 0.5" fill="none" stroke="#ddd" stroke-width="0.7"/></svg>
<div class="t" style="left:393px;top:795.0px;font-size:4.4px;line-height:10px;color:#d9d9d9;letter-spacing:-0.05px;">Separate XYZ</div>
<div class="t" style="right:1488px;top:804.7px;font-size:4.4px;line-height:10px;color:#d9d9d9;letter-spacing:-0.05px;">X</div>
<svg class="a" style="left:434.8px;top:807.5px;" width="4.4" height="4.4" viewBox="0 0 4.4 4.4"><circle cx="2.2" cy="2.2" r="1.7" fill="#a1a1a1" stroke="#111" stroke-width="0.5"/></svg>
<div class="t" style="right:1488px;top:813.0px;font-size:4.4px;line-height:10px;color:#d9d9d9;letter-spacing:-0.05px;">Y</div>
<svg class="a" style="left:434.8px;top:815.8px;" width="4.4" height="4.4" viewBox="0 0 4.4 4.4"><circle cx="2.2" cy="2.2" r="1.7" fill="#a1a1a1" stroke="#111" stroke-width="0.5"/></svg>
<div class="t" style="right:1488px;top:821.8px;font-size:4.4px;line-height:10px;color:#d9d9d9;letter-spacing:-0.05px;">Z</div>
<svg class="a" style="left:434.8px;top:824.5999999999999px;" width="4.4" height="4.4" viewBox="0 0 4.4 4.4"><circle cx="2.2" cy="2.2" r="1.7" fill="#a1a1a1" stroke="#111" stroke-width="0.5"/></svg>
<div class="t" style="left:388px;top:831.7px;font-size:4.4px;line-height:10px;color:#d9d9d9;letter-spacing:-0.05px;">Vector</div>
<svg class="a" style="left:380.8px;top:834.5px;" width="4.4" height="4.4" viewBox="0 0 4.4 4.4"><circle cx="2.2" cy="2.2" r="1.7" fill="#6363c7" stroke="#111" stroke-width="0.5"/></svg>
<div class="a" style="left:470px;top:706.5px;width:55px;height:69.60000000000002px;background:rgba(0,0,0,0.45);border-radius:3px;filter:blur(1.5px);"></div>
<div class="a" style="left:469px;top:705px;width:54px;height:68.60000000000002px;background:#303030;border-radius:2.5px;"></div>
<div class="a" style="left:469px;top:705px;width:54px;height:8px;background:#246283;border-radius:2.5px 2.5px 0 0;"></div>
<svg class="a" style="left:472px;top:707.5px;" width="4" height="3" viewBox="0 0 4 3"><path d="M0.5 0.5 L2 2.5 L3.5 0.5" fill="none" stroke="#ddd" stroke-width="0.7"/></svg>
<div class="t" style="left:479px;top:704.0px;font-size:4.4px;line-height:10px;color:#d9d9d9;letter-spacing:-0.05px;">Compare</div>
<div class="t" style="right:1402px;top:713.3px;font-size:4.4px;line-height:10px;color:#d9d9d9;letter-spacing:-0.05px;">Value</div>
<svg class="a" style="left:520.8px;top:716.0999999999999px;" width="4.4" height="4.4" viewBox="0 0 4.4 4.4"><circle cx="2.2" cy="2.2" r="1.7" fill="#a1a1a1" stroke="#111" stroke-width="0.5"/></svg>
<div class="a" style="left:473px;top:727.4px;width:46px;height:6.8px;background:#282828;border-radius:1.5px;box-sizing:border-box;border:0.5px solid #3a3a3a;"></div>
<div class="t" style="left:476px;top:725.8px;font-size:4.4px;line-height:10px;color:#d9d9d9;letter-spacing:-0.05px;">Compare</div>
<svg class="a" style="left:514px;top:729.3px;" width="4" height="3" viewBox="0 0 4 3"><path d="M0.5 0.5 L2 2.5 L3.5 0.5" fill="none" stroke="#ddd" stroke-width="0.7"/></svg>
<div class="a" style="left:474px;top:737.8px;width:5.4px;height:5.4px;background:#545454;border-radius:1px;"></div>
<div class="t" style="left:482px;top:735.5px;font-size:4.4px;line-height:10px;color:#d9d9d9;letter-spacing:-0.05px;">Clamp</div>
<div class="t" style="left:474px;top:745.2px;font-size:4.4px;line-height:10px;color:#d9d9d9;letter-spacing:-0.05px;">Value</div>
<svg class="a" style="left:466.8px;top:748.0px;" width="4.4" height="4.4" viewBox="0 0 4.4 4.4"><circle cx="2.2" cy="2.2" r="1.7" fill="#a1a1a1" stroke="#111" stroke-width="0.5"/></svg>
<div class="a" style="left:473px;top:755.1px;width:46px;height:6.8px;background:#545454;border-radius:1.5px;"></div>
<div class="t" style="left:477px;top:753.5px;font-size:4.4px;line-height:10px;color:#d9d9d9;letter-spacing:-0.05px;">Value</div>
<div class="t" style="right:1404px;top:753.5px;font-size:4.4px;line-height:10px;color:#d9d9d9;letter-spacing:-0.05px;">0.500</div>
<svg class="a" style="left:466.8px;top:756.3px;" width="4.4" height="4.4" viewBox="0 0 4.4 4.4"><circle cx="2.2" cy="2.2" r="1.7" fill="#a1a1a1" stroke="#111" stroke-width="0.5"/></svg>
<div class="a" style="left:473px;top:764.2px;width:46px;height:6.8px;background:#545454;border-radius:1.5px;"></div>
<div class="t" style="left:477px;top:762.6px;font-size:4.4px;line-height:10px;color:#d9d9d9;letter-spacing:-0.05px;">Epsilon</div>
<div class="t" style="right:1404px;top:762.6px;font-size:4.4px;line-height:10px;color:#d9d9d9;letter-spacing:-0.05px;">0.490</div>
<svg class="a" style="left:466.8px;top:765.4px;" width="4.4" height="4.4" viewBox="0 0 4.4 4.4"><circle cx="2.2" cy="2.2" r="1.7" fill="#a1a1a1" stroke="#111" stroke-width="0.5"/></svg>
<div class="a" style="left:466px;top:795.7px;width:55px;height:68.29999999999995px;background:rgba(0,0,0,0.45);border-radius:3px;filter:blur(1.5px);"></div>
<div class="a" style="left:465px;top:794.2px;width:54px;height:67.29999999999995px;background:#303030;border-radius:2.5px;"></div>
<div class="a" style="left:465px;top:794.2px;width:54px;height:7.099999999999909px;background:#246283;border-radius:2.5px 2.5px 0 0;"></div>
<svg class="a" style="left:468px;top:796.25px;" width="4" height="3" viewBox="0 0 4 3"><path d="M0.5 0.5 L2 2.5 L3.5 0.5" fill="none" stroke="#ddd" stroke-width="0.7"/></svg>
<div class="t" style="left:475px;top:792.75px;font-size:4.4px;line-height:10px;color:#d9d9d9;letter-spacing:-0.05px;">Compare</div>
<div class="t" style="right:1406px;top:801.4px;font-size:4.4px;line-height:10px;color:#d9d9d9;letter-spacing:-0.05px;">Value</div>
<svg class="a" style="left:516.8px;top:804.1999999999999px;" width="4.4" height="4.4" viewBox="0 0 4.4 4.4"><circle cx="2.2" cy="2.2" r="1.7" fill="#a1a1a1" stroke="#111" stroke-width="0.5"/></svg>
<div class="a" style="left:469px;top:815.6px;width:46px;height:6.8px;background:#282828;border-radius:1.5px;box-sizing:border-box;border:0.5px solid #3a3a3a;"></div>
<div class="t" style="left:472px;top:814.0px;font-size:4.4px;line-height:10px;color:#d9d9d9;letter-spacing:-0.05px;">Compare</div>
<svg class="a" style="left:510px;top:817.5px;" width="4" height="3" viewBox="0 0 4 3"><path d="M0.5 0.5 L2 2.5 L3.5 0.5" fill="none" stroke="#ddd" stroke-width="0.7"/></svg>
<div class="a" style="left:470px;top:825.8px;width:5.4px;height:5.4px;background:#545454;border-radius:1px;"></div>
<div class="t" style="left:478px;top:823.5px;font-size:4.4px;line-height:10px;color:#d9d9d9;letter-spacing:-0.05px;">Clamp</div>
<div class="t" style="left:470px;top:833.3px;font-size:4.4px;line-height:10px;color:#d9d9d9;letter-spacing:-0.05px;">Value</div>
<svg class="a" style="left:462.8px;top:836.0999999999999px;" width="4.4" height="4.4" viewBox="0 0 4.4 4.4"><circle cx="2.2" cy="2.2" r="1.7" fill="#a1a1a1" stroke="#111" stroke-width="0.5"/></svg>
<div class="a" style="left:469px;top:843.4px;width:46px;height:6.8px;background:#545454;border-radius:1.5px;"></div>
<div class="t" style="left:473px;top:841.8px;font-size:4.4px;line-height:10px;color:#d9d9d9;letter-spacing:-0.05px;">Value</div>
<div class="t" style="right:1408px;top:841.8px;font-size:4.4px;line-height:10px;color:#d9d9d9;letter-spacing:-0.05px;">0.500</div>
<svg class="a" style="left:462.8px;top:844.5999999999999px;" width="4.4" height="4.4" viewBox="0 0 4.4 4.4"><circle cx="2.2" cy="2.2" r="1.7" fill="#a1a1a1" stroke="#111" stroke-width="0.5"/></svg>
<div class="a" style="left:469px;top:852.4px;width:46px;height:6.8px;background:#545454;border-radius:1.5px;"></div>
<div class="t" style="left:473px;top:850.8px;font-size:4.4px;line-height:10px;color:#d9d9d9;letter-spacing:-0.05px;">Epsilon</div>
<div class="t" style="right:1408px;top:850.8px;font-size:4.4px;line-height:10px;color:#d9d9d9;letter-spacing:-0.05px;">0.490</div>
<svg class="a" style="left:462.8px;top:853.5999999999999px;" width="4.4" height="4.4" viewBox="0 0 4.4 4.4"><circle cx="2.2" cy="2.2" r="1.7" fill="#a1a1a1" stroke="#111" stroke-width="0.5"/></svg>
<div class="a" style="left:637px;top:730.5px;width:55px;height:60.799999999999955px;background:rgba(0,0,0,0.45);border-radius:3px;filter:blur(1.5px);"></div>
<div class="a" style="left:636px;top:729px;width:54px;height:59.799999999999955px;background:#303030;border-radius:2.5px;"></div>
<div class="a" style="left:636px;top:729px;width:54px;height:7px;background:#246283;border-radius:2.5px 2.5px 0 0;"></div>
<svg class="a" style="left:639px;top:731.0px;" width="4" height="3" viewBox="0 0 4 3"><path d="M0.5 0.5 L2 2.5 L3.5 0.5" fill="none" stroke="#ddd" stroke-width="0.7"/></svg>
<div class="t" style="left:646px;top:727.5px;font-size:4.4px;line-height:10px;color:#d9d9d9;letter-spacing:-0.05px;">Multiply</div>
<div class="t" style="right:1235px;top:736.5px;font-size:4.4px;line-height:10px;color:#d9d9d9;letter-spacing:-0.05px;">Value</div>
<svg class="a" style="left:687.8px;top:739.3px;" width="4.4" height="4.4" viewBox="0 0 4.4 4.4"><circle cx="2.2" cy="2.2" r="1.7" fill="#a1a1a1" stroke="#111" stroke-width="0.5"/></svg>
<div class="a" style="left:640px;top:750.1px;width:46px;height:6.8px;background:#282828;border-radius:1.5px;box-sizing:border-box;border:0.5px solid #3a3a3a;"></div>
<div class="t" style="left:643px;top:748.5px;font-size:4.4px;line-height:10px;color:#d9d9d9;letter-spacing:-0.05px;">Multiply</div>
<svg class="a" style="left:681px;top:752.0px;" width="4" height="3" viewBox="0 0 4 3"><path d="M0.5 0.5 L2 2.5 L3.5 0.5" fill="none" stroke="#ddd" stroke-width="0.7"/></svg>
<div class="a" style="left:641px;top:760.9px;width:5.4px;height:5.4px;background:#545454;border-radius:1px;"></div>
<div class="t" style="left:649px;top:758.6px;font-size:4.4px;line-height:10px;color:#d9d9d9;letter-spacing:-0.05px;">Clamp</div>
<div class="t" style="left:641px;top:768.4px;font-size:4.4px;line-height:10px;color:#d9d9d9;letter-spacing:-0.05px;">Value</div>
<svg class="a" style="left:633.8px;top:771.1999999999999px;" width="4.4" height="4.4" viewBox="0 0 4.4 4.4"><circle cx="2.2" cy="2.2" r="1.7" fill="#a1a1a1" stroke="#111" stroke-width="0.5"/></svg>
<div class="t" style="left:641px;top:777.7px;font-size:4.4px;line-height:10px;color:#d9d9d9;letter-spacing:-0.05px;">Value</div>
<svg class="a" style="left:633.8px;top:780.5px;" width="4.4" height="4.4" viewBox="0 0 4.4 4.4"><circle cx="2.2" cy="2.2" r="1.7" fill="#a1a1a1" stroke="#111" stroke-width="0.5"/></svg>
<div class="a" style="left:740px;top:658.1px;width:96px;height:84.19999999999993px;background:rgba(0,0,0,0.45);border-radius:3px;filter:blur(1.5px);"></div>
<div class="a" style="left:739px;top:656.6px;width:95px;height:83.19999999999993px;background:#303030;border-radius:2.5px;"></div>
<div class="a" style="left:739px;top:656.6px;width:95px;height:7.699999999999932px;background:#246283;border-radius:2.5px 2.5px 0 0;"></div>
<svg class="a" style="left:742px;top:658.95px;" width="4" height="3" viewBox="0 0 4 3"><path d="M0.5 0.5 L2 2.5 L3.5 0.5" fill="none" stroke="#ddd" stroke-width="0.7"/></svg>
<div class="t" style="left:749px;top:655.45px;font-size:4.4px;line-height:10px;color:#d9d9d9;letter-spacing:-0.05px;">ColorRamp</div>
<div class="t" style="right:1091px;top:664.5px;font-size:4.4px;line-height:10px;color:#d9d9d9;letter-spacing:-0.05px;">Color</div>
<svg class="a" style="left:831.8px;top:667.3px;" width="4.4" height="4.4" viewBox="0 0 4.4 4.4"><circle cx="2.2" cy="2.2" r="1.7" fill="#c7c729" stroke="#111" stroke-width="0.5"/></svg>
<div class="t" style="right:1091px;top:673.6px;font-size:4.4px;line-height:10px;color:#d9d9d9;letter-spacing:-0.05px;">Alpha</div>
<svg class="a" style="left:831.8px;top:676.4px;" width="4.4" height="4.4" viewBox="0 0 4.4 4.4"><circle cx="2.2" cy="2.2" r="1.7" fill="#a1a1a1" stroke="#111" stroke-width="0.5"/></svg>
<div class="a" style="left:779px;top:689.6px;width:25px;height:6.8px;background:#282828;border-radius:1.5px;box-sizing:border-box;border:0.5px solid #3a3a3a;"></div>
<div class="t" style="left:782px;top:688.0px;font-size:4.4px;line-height:10px;color:#d9d9d9;letter-spacing:-0.05px;">RGB</div>
<svg class="a" style="left:799px;top:691.5px;" width="4" height="3" viewBox="0 0 4 3"><path d="M0.5 0.5 L2 2.5 L3.5 0.5" fill="none" stroke="#ddd" stroke-width="0.7"/></svg>
<div class="a" style="left:805px;top:689.6px;width:24px;height:6.8px;background:#282828;border-radius:1.5px;box-sizing:border-box;border:0.5px solid #3a3a3a;"></div>
<div class="t" style="left:808px;top:688.0px;font-size:4.4px;line-height:10px;color:#d9d9d9;letter-spacing:-0.05px;">Ease</div>
<svg class="a" style="left:824px;top:691.5px;" width="4" height="3" viewBox="0 0 4 3"><path d="M0.5 0.5 L2 2.5 L3.5 0.5" fill="none" stroke="#ddd" stroke-width="0.7"/></svg>
<svg class="a" style="left:765px;top:691px;" width="5" height="4" viewBox="0 0 5 4"><path d="M0.5 0.5 L2.5 3 L4.5 0.5" fill="none" stroke="#ddd" stroke-width="0.7"/></svg>
<svg class="a" style="left:748px;top:698.5px;" width="78" height="8" viewBox="0 0 78 8"><defs><linearGradient id="rg" x1="0" x2="1"><stop offset="0" stop-color="#1b7fb0"/><stop offset="1" stop-color="#b0b0b0"/></linearGradient></defs><rect x="0" y="0" width="78" height="8" fill="#000"/><rect x="1" y="1" width="76" height="6" fill="url(#rg)"/><rect x="5" y="1" width="4" height="6" fill="#000" fill-opacity="0.12"/><rect x="13" y="1" width="4" height="6" fill="#000" fill-opacity="0.12"/><rect x="21" y="1" width="4" height="6" fill="#000" fill-opacity="0.12"/><rect x="29" y="1" width="4" height="6" fill="#000" fill-opacity="0.12"/><rect x="37" y="1" width="4" height="6" fill="#000" fill-opacity="0.12"/><rect x="45" y="1" width="4" height="6" fill="#000" fill-opacity="0.12"/><rect x="53" y="1" width="4" height="6" fill="#000" fill-opacity="0.12"/><rect x="61" y="1" width="4" height="6" fill="#000" fill-opacity="0.12"/><rect x="69" y="1" width="4" height="6" fill="#000" fill-opacity="0.12"/><rect x="0.5" y="0.5" width="1.5" height="7" fill="#fff"/><rect x="76" y="0.5" width="1.5" height="7" fill="#fff"/></svg>
<div class="a" style="left:744px;top:711px;width:23px;height:7px;background:#545454;border-radius:1.5px;"></div>
<div class="t" style="left:745.5px;top:709.5px;width:20px;text-align:center;font-size:4.4px;line-height:10px;color:#d9d9d9;letter-spacing:-0.05px;">0</div>
<div class="a" style="left:772px;top:711.1px;width:57px;height:6.8px;background:#545454;border-radius:1.5px;"></div>
<div class="t" style="left:776px;top:709.5px;font-size:4.4px;line-height:10px;color:#d9d9d9;letter-spacing:-0.05px;">Pos</div>
<div class="t" style="right:1094px;top:709.5px;font-size:4.4px;line-height:10px;color:#d9d9d9;letter-spacing:-0.05px;">0.000</div>
<div class="a" style="left:744px;top:721.5px;width:85px;height:6.5px;background:#1a7aab;border-radius:1px;"></div>
<div class="t" style="left:744px;top:729.4px;font-size:4.4px;line-height:10px;color:#d9d9d9;letter-spacing:-0.05px;">Fac</div>
<svg class="a" style="left:736.8px;top:732.1999999999999px;" width="4.4" height="4.4" viewBox="0 0 4.4 4.4"><circle cx="2.2" cy="2.2" r="1.7" fill="#a1a1a1" stroke="#111" stroke-width="0.5"/></svg>
<div class="a" style="left:989px;top:683.9px;width:96px;height:263.6px;background:rgba(0,0,0,0.45);border-radius:3px;filter:blur(1.5px);"></div>
<div class="a" style="left:988px;top:682.4px;width:95px;height:262.6px;background:#303030;border-radius:2.5px;"></div>
<div class="a" style="left:988px;top:682.4px;width:95px;height:7.600000000000023px;background:#2b652b;border-radius:2.5px 2.5px 0 0;"></div>
<svg class="a" style="left:991px;top:684.7px;" width="4" height="3" viewBox="0 0 4 3"><path d="M0.5 0.5 L2 2.5 L3.5 0.5" fill="none" stroke="#ddd" stroke-width="0.7"/></svg>
<div class="t" style="left:998px;top:681.2px;font-size:4.4px;line-height:10px;color:#d9d9d9;letter-spacing:-0.05px;">Principled BSDF</div>
<div class="t" style="right:842px;top:690.4px;font-size:4.4px;line-height:10px;color:#d9d9d9;letter-spacing:-0.05px;">BSDF</div>
<svg class="a" style="left:1080.8px;top:693.1999999999999px;" width="4.4" height="4.4" viewBox="0 0 4.4 4.4"><circle cx="2.2" cy="2.2" r="1.7" fill="#63c763" stroke="#111" stroke-width="0.5"/></svg>
<div class="a" style="left:993px;top:704.4px;width:86px;height:6.8px;background:#282828;border-radius:1.5px;box-sizing:border-box;border:0.5px solid #3a3a3a;"></div>
<div class="t" style="left:996px;top:702.8px;font-size:4.4px;line-height:10px;color:#d9d9d9;letter-spacing:-0.05px;">GGX</div>
<svg class="a" style="left:1074px;top:706.3px;" width="4" height="3" viewBox="0 0 4 3"><path d="M0.5 0.5 L2 2.5 L3.5 0.5" fill="none" stroke="#ddd" stroke-width="0.7"/></svg>
<div class="a" style="left:993px;top:714.3000000000001px;width:86px;height:6.8px;background:#282828;border-radius:1.5px;box-sizing:border-box;border:0.5px solid #3a3a3a;"></div>
<div class="t" style="left:996px;top:712.7px;font-size:4.4px;line-height:10px;color:#d9d9d9;letter-spacing:-0.05px;">Random Walk</div>
<svg class="a" style="left:1074px;top:716.2px;" width="4" height="3" viewBox="0 0 4 3"><path d="M0.5 0.5 L2 2.5 L3.5 0.5" fill="none" stroke="#ddd" stroke-width="0.7"/></svg>
<svg class="a" style="left:985.8px;top:725.0999999999999px;" width="4.4" height="4.4" viewBox="0 0 4.4 4.4"><circle cx="2.2" cy="2.2" r="1.7" fill="#c7c729" stroke="#111" stroke-width="0.5"/></svg>
<div class="t" style="left:993px;top:722.3px;font-size:4.4px;line-height:10px;color:#d9d9d9;letter-spacing:-0.05px;">Base Color</div>
<svg class="a" style="left:985.8px;top:734.1999999999999px;" width="4.4" height="4.4" viewBox="0 0 4.4 4.4"><circle cx="2.2" cy="2.2" r="1.7" fill="#a1a1a1" stroke="#111" stroke-width="0.5"/></svg>
<div class="a" style="left:993px;top:733.0px;width:86px;height:6.8px;background:#545454;border-radius:1.5px;"></div>
<div class="t" style="left:997px;top:731.4px;font-size:4.4px;line-height:10px;color:#d9d9d9;letter-spacing:-0.05px;">&nbsp;&nbsp;&nbsp;Subsurface</div>
<div class="t" style="right:844px;top:731.4px;font-size:4.4px;line-height:10px;color:#d9d9d9;letter-spacing:-0.05px;">0.000</div>
<svg class="a" style="left:985.8px;top:743.0999999999999px;" width="4.4" height="4.4" viewBox="0 0 4.4 4.4"><circle cx="2.2" cy="2.2" r="1.7" fill="#6363c7" stroke="#111" stroke-width="0.5"/></svg>
<div class="a" style="left:993px;top:741.9px;width:86px;height:6.8px;background:#282828;border-radius:1.5px;box-sizing:border-box;border:0.5px solid #3a3a3a;"></div>
<div class="t" style="left:996px;top:740.3px;font-size:4.4px;line-height:10px;color:#d9d9d9;letter-spacing:-0.05px;">Subsurface Radius</div>
<svg class="a" style="left:1074px;top:743.8px;" width="4" height="3" viewBox="0 0 4 3"><path d="M0.5 0.5 L2 2.5 L3.5 0.5" fill="none" stroke="#ddd" stroke-width="0.7"/></svg>
<svg class="a" style="left:985.8px;top:752.1999999999999px;" width="4.4" height="4.4" viewBox="0 0 4.4 4.4"><circle cx="2.2" cy="2.2" r="1.7" fill="#c7c729" stroke="#111" stroke-width="0.5"/></svg>
<div class="t" style="left:993px;top:749.4px;font-size:4.4px;line-height:10px;color:#d9d9d9;letter-spacing:-0.05px;">Subsurface Color</div>
<div class="a" style="left:1030px;top:751.0px;width:49px;height:6.8px;background:#e8e8e8;border-radius:1px;"></div>
<svg class="a" style="left:985.8px;top:760.4px;" width="4.4" height="4.4" viewBox="0 0 4.4 4.4"><circle cx="2.2" cy="2.2" r="1.7" fill="#a1a1a1" stroke="#111" stroke-width="0.5"/></svg>
<div class="a" style="left:993px;top:759.2px;width:86px;height:6.8px;background:#545454;border-radius:1.5px;"></div>
<div class="a" style="left:993px;top:759.2px;width:8.6px;height:6.8px;background:#4772b3;border-radius:1.5px 0 0 1.5px;"></div>
<div class="t" style="left:997px;top:757.6px;font-size:4.4px;line-height:10px;color:#d9d9d9;letter-spacing:-0.05px;">&nbsp;&nbsp;&nbsp;Subsurface IOR</div>
<div class="t" style="right:844px;top:757.6px;font-size:4.4px;line-height:10px;color:#d9d9d9;letter-spacing:-0.05px;">1.400</div>
<svg class="a" style="left:985.8px;top:769.5px;" width="4.4" height="4.4" viewBox="0 0 4.4 4.4"><circle cx="2.2" cy="2.2" r="1.7" fill="#a1a1a1" stroke="#111" stroke-width="0.5"/></svg>
<div class="a" style="left:993px;top:768.3000000000001px;width:86px;height:6.8px;background:#545454;border-radius:1.5px;"></div>
<div class="t" style="left:997px;top:766.7px;font-size:4.4px;line-height:10px;color:#d9d9d9;letter-spacing:-0.05px;">&nbsp;&nbsp;&nbsp;Subsurface Anisotropy</div>
<div class="t" style="right:844px;top:766.7px;font-size:4.4px;line-height:10px;color:#d9d9d9;letter-spacing:-0.05px;">0.000</div>
<svg class="a" style="left:985.8px;top:778.4px;" width="4.4" height="4.4" viewBox="0 0 4.4 4.4"><circle cx="2.2" cy="2.2" r="1.7" fill="#a1a1a1" stroke="#111" stroke-width="0.5"/></svg>
<div class="a" style="left:993px;top:777.2px;width:86px;height:6.8px;background:#545454;border-radius:1.5px;"></div>
<div class="t" style="left:997px;top:775.6px;font-size:4.4px;line-height:10px;color:#d9d9d9;letter-spacing:-0.05px;">&nbsp;&nbsp;&nbsp;Metallic</div>
<div class="t" style="right:844px;top:775.6px;font-size:4.4px;line-height:10px;color:#d9d9d9;letter-spacing:-0.05px;">0.000</div>
<svg class="a" style="left:985.8px;top:787.5px;" width="4.4" height="4.4" viewBox="0 0 4.4 4.4"><circle cx="2.2" cy="2.2" r="1.7" fill="#a1a1a1" stroke="#111" stroke-width="0.5"/></svg>
<div class="a" style="left:993px;top:786.3000000000001px;width:86px;height:6.8px;background:#545454;border-radius:1.5px;"></div>
<div class="a" style="left:993px;top:786.3000000000001px;width:43.0px;height:6.8px;background:#4772b3;border-radius:1.5px 0 0 1.5px;"></div>
<div class="t" style="left:997px;top:784.7px;font-size:4.4px;line-height:10px;color:#d9d9d9;letter-spacing:-0.05px;">&nbsp;&nbsp;&nbsp;Specular</div>
<div class="t" style="right:844px;top:784.7px;font-size:4.4px;line-height:10px;color:#d9d9d9;letter-spacing:-0.05px;">0.500</div>
<svg class="a" style="left:985.8px;top:796.3px;" width="4.4" height="4.4" viewBox="0 0 4.4 4.4"><circle cx="2.2" cy="2.2" r="1.7" fill="#a1a1a1" stroke="#111" stroke-width="0.5"/></svg>
<div class="a" style="left:993px;top:795.1px;width:86px;height:6.8px;background:#545454;border-radius:1.5px;"></div>
<div class="t" style="left:997px;top:793.5px;font-size:4.4px;line-height:10px;color:#d9d9d9;letter-spacing:-0.05px;">&nbsp;&nbsp;&nbsp;Specular Tint</div>
<div class="t" style="right:844px;top:793.5px;font-size:4.4px;line-height:10px;color:#d9d9d9;letter-spacing:-0.05px;">0.000</div>
<svg class="a" style="left:985.8px;top:804.5999999999999px;" width="4.4" height="4.4" viewBox="0 0 4.4 4.4"><circle cx="2.2" cy="2.2" r="1.7" fill="#a1a1a1" stroke="#111" stroke-width="0.5"/></svg>
<div class="a" style="left:993px;top:803.4px;width:86px;height:6.8px;background:#545454;border-radius:1.5px;"></div>
<div class="a" style="left:993px;top:803.4px;width:43.0px;height:6.8px;background:#4772b3;border-radius:1.5px 0 0 1.5px;"></div>
<div class="t" style="left:997px;top:801.8px;font-size:4.4px;line-height:10px;color:#d9d9d9;letter-spacing:-0.05px;">&nbsp;&nbsp;&nbsp;Roughness</div>
<div class="t" style="right:844px;top:801.8px;font-size:4.4px;line-height:10px;color:#d9d9d9;letter-spacing:-0.05px;">0.500</div>
<svg class="a" style="left:985.8px;top:813.0999999999999px;" width="4.4" height="4.4" viewBox="0 0 4.4 4.4"><circle cx="2.2" cy="2.2" r="1.7" fill="#a1a1a1" stroke="#111" stroke-width="0.5"/></svg>
<div class="a" style="left:993px;top:811.9px;width:86px;height:6.8px;background:#545454;border-radius:1.5px;"></div>
<div class="t" style="left:997px;top:810.3px;font-size:4.4px;line-height:10px;color:#d9d9d9;letter-spacing:-0.05px;">&nbsp;&nbsp;&nbsp;Anisotropic</div>
<div class="t" style="right:844px;top:810.3px;font-size:4.4px;line-height:10px;color:#d9d9d9;letter-spacing:-0.05px;">0.000</div>
<svg class="a" style="left:985.8px;top:822.1999999999999px;" width="4.4" height="4.4" viewBox="0 0 4.4 4.4"><circle cx="2.2" cy="2.2" r="1.7" fill="#a1a1a1" stroke="#111" stroke-width="0.5"/></svg>
<div class="a" style="left:993px;top:821.0px;width:86px;height:6.8px;background:#545454;border-radius:1.5px;"></div>
<div class="t" style="left:997px;top:819.4px;font-size:4.4px;line-height:10px;color:#d9d9d9;letter-spacing:-0.05px;">&nbsp;&nbsp;&nbsp;Anisotropic Rotation</div>
<div class="t" style="right:844px;top:819.4px;font-size:4.4px;line-height:10px;color:#d9d9d9;letter-spacing:-0.05px;">0.000</div>
<svg class="a" style="left:985.8px;top:831.3px;" width="4.4" height="4.4" viewBox="0 0 4.4 4.4"><circle cx="2.2" cy="2.2" r="1.7" fill="#a1a1a1" stroke="#111" stroke-width="0.5"/></svg>
<div class="a" style="left:993px;top:830.1px;width:86px;height:6.8px;background:#545454;border-radius:1.5px;"></div>
<div class="t" style="left:997px;top:828.5px;font-size:4.4px;line-height:10px;color:#d9d9d9;letter-spacing:-0.05px;">&nbsp;&nbsp;&nbsp;Sheen</div>
<div class="t" style="right:844px;top:828.5px;font-size:4.4px;line-height:10px;color:#d9d9d9;letter-spacing:-0.05px;">0.000</div>
<svg class="a" style="left:985.8px;top:839.5999999999999px;" width="4.4" height="4.4" viewBox="0 0 4.4 4.4"><circle cx="2.2" cy="2.2" r="1.7" fill="#a1a1a1" stroke="#111" stroke-width="0.5"/></svg>
<div class="a" style="left:993px;top:838.4px;width:86px;height:6.8px;background:#545454;border-radius:1.5px;"></div>
<div class="a" style="left:993px;top:838.4px;width:43.0px;height:6.8px;background:#4772b3;border-radius:1.5px 0 0 1.5px;"></div>
<div class="t" style="left:997px;top:836.8px;font-size:4.4px;line-height:10px;color:#d9d9d9;letter-spacing:-0.05px;">&nbsp;&nbsp;&nbsp;Sheen Tint</div>
<div class="t" style="right:844px;top:836.8px;font-size:4.4px;line-height:10px;color:#d9d9d9;letter-spacing:-0.05px;">0.500</div>
<svg class="a" style="left:985.8px;top:848.4px;" width="4.4" height="4.4" viewBox="0 0 4.4 4.4"><circle cx="2.2" cy="2.2" r="1.7" fill="#a1a1a1" stroke="#111" stroke-width="0.5"/></svg>
<div class="a" style="left:993px;top:847.2px;width:86px;height:6.8px;background:#545454;border-radius:1.5px;"></div>
<div class="t" style="left:997px;top:845.6px;font-size:4.4px;line-height:10px;color:#d9d9d9;letter-spacing:-0.05px;">&nbsp;&nbsp;&nbsp;Clearcoat</div>
<div class="t" style="right:844px;top:845.6px;font-size:4.4px;line-height:10px;color:#d9d9d9;letter-spacing:-0.05px;">0.000</div>
<svg class="a" style="left:985.8px;top:857.5px;" width="4.4" height="4.4" viewBox="0 0 4.4 4.4"><circle cx="2.2" cy="2.2" r="1.7" fill="#a1a1a1" stroke="#111" stroke-width="0.5"/></svg>
<div class="a" style="left:993px;top:856.3000000000001px;width:86px;height:6.8px;background:#545454;border-radius:1.5px;"></div>
<div class="a" style="left:993px;top:856.3000000000001px;width:1.72px;height:6.8px;background:#4772b3;border-radius:1.5px 0 0 1.5px;"></div>
<div class="t" style="left:997px;top:854.7px;font-size:4.4px;line-height:10px;color:#d9d9d9;letter-spacing:-0.05px;">&nbsp;&nbsp;&nbsp;Clearcoat Roughness</div>
<div class="t" style="right:844px;top:854.7px;font-size:4.4px;line-height:10px;color:#d9d9d9;letter-spacing:-0.05px;">0.030</div>
<svg class="a" style="left:985.8px;top:866.3px;" width="4.4" height="4.4" viewBox="0 0 4.4 4.4"><circle cx="2.2" cy="2.2" r="1.7" fill="#a1a1a1" stroke="#111" stroke-width="0.5"/></svg>
<div class="a" style="left:993px;top:865.1px;width:86px;height:6.8px;background:#545454;border-radius:1.5px;"></div>
<div class="t" style="left:997px;top:863.5px;font-size:4.4px;line-height:10px;color:#d9d9d9;letter-spacing:-0.05px;">&nbsp;&nbsp;&nbsp;IOR</div>
<div class="t" style="right:844px;top:863.5px;font-size:4.4px;line-height:10px;color:#d9d9d9;letter-spacing:-0.05px;">1.450</div>
<svg class="a" style="left:985.8px;top:875.0999999999999px;" width="4.4" height="4.4" viewBox="0 0 4.4 4.4"><circle cx="2.2" cy="2.2" r="1.7" fill="#a1a1a1" stroke="#111" stroke-width="0.5"/></svg>
<div class="a" style="left:993px;top:873.9px;width:86px;height:6.8px;background:#545454;border-radius:1.5px;"></div>
<div class="t" style="left:997px;top:872.3px;font-size:4.4px;line-height:10px;color:#d9d9d9;letter-spacing:-0.05px;">&nbsp;&nbsp;&nbsp;Transmission</div>
<div class="t" style="right:844px;top:872.3px;font-size:4.4px;line-height:10px;color:#d9d9d9;letter-spacing:-0.05px;">0.000</div>
<svg class="a" style="left:985.8px;top:883.4px;" width="4.4" height="4.4" viewBox="0 0 4.4 4.4"><circle cx="2.2" cy="2.2" r="1.7" fill="#a1a1a1" stroke="#111" stroke-width="0.5"/></svg>
<div class="a" style="left:993px;top:882.2px;width:86px;height:6.8px;background:#545454;border-radius:1.5px;"></div>
<div class="t" style="left:997px;top:880.6px;font-size:4.4px;line-height:10px;color:#d9d9d9;letter-spacing:-0.05px;">&nbsp;&nbsp;&nbsp;Transmission Roughness</div>
<div class="t" style="right:844px;top:880.6px;font-size:4.4px;line-height:10px;color:#d9d9d9;letter-spacing:-0.05px;">0.000</div>
<svg class="a" style="left:985.8px;top:892.5px;" width="4.4" height="4.4" viewBox="0 0 4.4 4.4"><circle cx="2.2" cy="2.2" r="1.7" fill="#c7c729" stroke="#111" stroke-width="0.5"/></svg>
<div class="t" style="left:993px;top:889.7px;font-size:4.4px;line-height:10px;color:#d9d9d9;letter-spacing:-0.05px;">Emission</div>
<svg class="a" style="left:985.8px;top:901.3px;" width="4.4" height="4.4" viewBox="0 0 4.4 4.4"><circle cx="2.2" cy="2.2" r="1.7" fill="#a1a1a1" stroke="#111" stroke-width="0.5"/></svg>
<div class="a" style="left:993px;top:900.1px;width:86px;height:6.8px;background:#545454;border-radius:1.5px;"></div>
<div class="t" style="left:997px;top:898.5px;font-size:4.4px;line-height:10px;color:#d9d9d9;letter-spacing:-0.05px;">&nbsp;&nbsp;&nbsp;Emission Strength</div>
<div class="t" style="right:844px;top:898.5px;font-size:4.4px;line-height:10px;color:#d9d9d9;letter-spacing:-0.05px;">1.000</div>
<svg class="a" style="left:985.8px;top:910.4px;" width="4.4" height="4.4" viewBox="0 0 4.4 4.4"><circle cx="2.2" cy="2.2" r="1.7" fill="#a1a1a1" stroke="#111" stroke-width="0.5"/></svg>
<div class="t" style="left:993px;top:907.6px;font-size:4.4px;line-height:10px;color:#d9d9d9;letter-spacing:-0.05px;">Alpha</div>
<svg class="a" style="left:985.8px;top:919.1999999999999px;" width="4.4" height="4.4" viewBox="0 0 4.4 4.4"><circle cx="2.2" cy="2.2" r="1.7" fill="#6363c7" stroke="#111" stroke-width="0.5"/></svg>
<div class="t" style="left:993px;top:916.4px;font-size:4.4px;line-height:10px;color:#d9d9d9;letter-spacing:-0.05px;">Normal</div>
<svg class="a" style="left:985.8px;top:927.1999999999999px;" width="4.4" height="4.4" viewBox="0 0 4.4 4.4"><circle cx="2.2" cy="2.2" r="1.7" fill="#6363c7" stroke="#111" stroke-width="0.5"/></svg>
<div class="t" style="left:993px;top:924.4px;font-size:4.4px;line-height:10px;color:#d9d9d9;letter-spacing:-0.05px;">Clearcoat Normal</div>
<svg class="a" style="left:985.8px;top:936.0999999999999px;" width="4.4" height="4.4" viewBox="0 0 4.4 4.4"><circle cx="2.2" cy="2.2" r="1.7" fill="#6363c7" stroke="#111" stroke-width="0.5"/></svg>
<div class="t" style="left:993px;top:933.3px;font-size:4.4px;line-height:10px;color:#d9d9d9;letter-spacing:-0.05px;">Tangent</div>
<div class="a" style="left:1118px;top:683.9px;width:55px;height:48.60000000000002px;background:rgba(0,0,0,0.45);border-radius:3px;filter:blur(1.5px);"></div>
<div class="a" style="left:1117px;top:682.4px;width:54px;height:47.60000000000002px;background:#303030;border-radius:2.5px;"></div>
<div class="a" style="left:1117px;top:682.4px;width:54px;height:7.600000000000023px;background:#5c2330;border-radius:2.5px 2.5px 0 0;"></div>
<svg class="a" style="left:1120px;top:684.7px;" width="4" height="3" viewBox="0 0 4 3"><path d="M0.5 0.5 L2 2.5 L3.5 0.5" fill="none" stroke="#ddd" stroke-width="0.7"/></svg>
<div class="t" style="left:1127px;top:681.2px;font-size:4.4px;line-height:10px;color:#d9d9d9;letter-spacing:-0.05px;">Material Output</div>
<div class="a" style="left:1121px;top:693.3000000000001px;width:47px;height:6.8px;background:#282828;border-radius:1.5px;box-sizing:border-box;border:0.5px solid #3a3a3a;"></div>
<div class="t" style="left:1124px;top:691.7px;font-size:4.4px;line-height:10px;color:#d9d9d9;letter-spacing:-0.05px;">All</div>
<svg class="a" style="left:1163px;top:695.2px;" width="4" height="3" viewBox="0 0 4 3"><path d="M0.5 0.5 L2 2.5 L3.5 0.5" fill="none" stroke="#ddd" stroke-width="0.7"/></svg>
<div class="t" style="left:1122px;top:701.1px;font-size:4.4px;line-height:10px;color:#d9d9d9;letter-spacing:-0.05px;">Surface</div>
<svg class="a" style="left:1114.8px;top:703.9px;" width="4.4" height="4.4" viewBox="0 0 4.4 4.4"><circle cx="2.2" cy="2.2" r="1.7" fill="#63c763" stroke="#111" stroke-width="0.5"/></svg>
<div class="t" style="left:1122px;top:709.7px;font-size:4.4px;line-height:10px;color:#d9d9d9;letter-spacing:-0.05px;">Volume</div>
<svg class="a" style="left:1114.8px;top:712.5px;" width="4.4" height="4.4" viewBox="0 0 4.4 4.4"><circle cx="2.2" cy="2.2" r="1.7" fill="#63c763" stroke="#111" stroke-width="0.5"/></svg>
<div class="t" style="left:1122px;top:718.5px;font-size:4.4px;line-height:10px;color:#d9d9d9;letter-spacing:-0.05px;">Displacement</div>
<svg class="a" style="left:1114.8px;top:721.3px;" width="4.4" height="4.4" viewBox="0 0 4.4 4.4"><circle cx="2.2" cy="2.2" r="1.7" fill="#6363c7" stroke="#111" stroke-width="0.5"/></svg>
<div class="a" style="left:8px;top:581px;width:31px;height:20px;background:#282828;border-radius:4px;box-sizing:border-box;border:1px solid #3a3a3a;"></div>
<svg class="a" style="left:26px;top:588.5px;" width="8" height="6" viewBox="0 0 8 6"><path d="M1 1.5 L4 4.5 L7 1.5" fill="none" stroke="#d0d0d0" stroke-width="1.2"/></svg>
<svg class="a" style="left:11px;top:583px;" width="18" height="16" viewBox="0 0 18 16"><circle cx="8" cy="8" r="6.3" fill="none" stroke="#e6e6e6" stroke-width="1.2"/><path d="M5 6.5 A3.5 3.5 0 0 1 7 4.5" fill="none" stroke="#e6e6e6" stroke-width="1.2"/></svg>
<div class="a" style="left:45px;top:581px;width:89px;height:20px;background:#282828;border-radius:4px;box-sizing:border-box;border:1px solid #3a3a3a;"></div>
<svg class="a" style="left:121px;top:588.5px;" width="8" height="6" viewBox="0 0 8 6"><path d="M1 1.5 L4 4.5 L7 1.5" fill="none" stroke="#d0d0d0" stroke-width="1.2"/></svg>
<svg class="a" style="left:50px;top:584px;" width="14" height="14" viewBox="0 0 14 14"><path d="M1 4 V1 H4 M10 1 H13 V4 M13 10 V13 H10 M4 13 H1 V10" fill="none" stroke="#e0e0e0" stroke-width="1.1"/><rect x="3.5" y="3.5" width="7" height="7" fill="#e0e0e0"/></svg>
<div class="t" style="left:71px;top:582.5px;font-size:11.2px;line-height:17px;color:#e6e6e6;">Object</div>
<div class="t" style="left:146px;top:582.5px;font-size:11.2px;line-height:17px;color:#e6e6e6;">View</div>
<div class="t" style="left:186px;top:582.5px;font-size:11.2px;line-height:17px;color:#e6e6e6;">Select</div>
<div class="t" style="left:232px;top:582.5px;font-size:11.2px;line-height:17px;color:#e6e6e6;">Add</div>
<div class="t" style="left:266px;top:582.5px;font-size:11.2px;line-height:17px;color:#e6e6e6;">Node</div>
<div class="a" style="left:305px;top:584px;width:13px;height:13px;background:#4772b3;border-radius:2px;"></div>
<svg class="a" style="left:305px;top:584px;" width="13" height="13" viewBox="0 0 13 13"><path d="M3 6.5 L5.5 9 L10 4" fill="none" stroke="#fff" stroke-width="1.6"/></svg>
<div class="t" style="left:322px;top:582.5px;font-size:11.2px;line-height:17px;color:#e6e6e6;">Use Nodes</div>
<div class="a" style="left:621px;top:581px;width:80px;height:20px;background:#282828;border-radius:4px;box-sizing:border-box;border:1px solid #3a3a3a;"></div>
<svg class="a" style="left:688px;top:588.5px;" width="8" height="6" viewBox="0 0 8 6"><path d="M1 1.5 L4 4.5 L7 1.5" fill="none" stroke="#d0d0d0" stroke-width="1.2"/></svg>
<div class="t" style="left:629px;top:582.5px;font-size:11.2px;line-height:17px;color:#e6e6e6;">Slot 1</div>
<div class="a" style="left:706px;top:581px;width:212px;height:20px;background:#282828;border-radius:4px;box-sizing:border-box;border:1px solid #363636;"></div>
<div class="a" style="left:737px;top:582px;width:120px;height:18px;background:#1d1d1d;"></div>
<div class="a" style="left:857px;top:582px;width:60px;height:18px;background:#4a4a4a;border-radius:0 3px 3px 0;"></div>
<div class="a" style="left:877px;top:582px;width:1px;height:18px;background:#333333;"></div>
<div class="a" style="left:897px;top:582px;width:1px;height:18px;background:#333333;"></div>
<svg class="a" style="left:710px;top:583px;" width="16" height="16" viewBox="0 0 16 16"><circle cx="8" cy="8" r="6.5" fill="#e6e6e6"/><path d="M8 8 H14.5 A6.5 6.5 0 0 1 8 14.5 Z" fill="#282828"/><path d="M8 8 V1.5 A6.5 6.5 0 0 0 1.5 8 Z" fill="#282828"/><circle cx="8" cy="8" r="6.5" fill="none" stroke="#e6e6e6" stroke-width="1"/></svg>
<svg class="a" style="left:727px;top:588.5px;" width="8" height="6" viewBox="0 0 8 6"><path d="M1 1.5 L4 4.5 L7 1.5" fill="none" stroke="#d0d0d0" stroke-width="1.2"/></svg>
<div class="t" style="left:745px;top:582.5px;font-size:11.2px;line-height:17px;color:#e6e6e6;">Material.001</div>
<svg class="a" style="left:860px;top:583.5px;" width="14" height="15" viewBox="0 0 14 15"><path d="M7 1.5 L12.5 3.5 V8 C12.5 11 10 13 7 14 C4 13 1.5 11 1.5 8 V3.5 Z" fill="none" stroke="#9a9a9a" stroke-width="1.1"/></svg>
<svg class="a" style="left:880px;top:583px;" width="16" height="16" viewBox="0 0 16 16"><path d="M5.6 1.7 H11.5 L14.4 4.6 V10.4 H5.6 Z" fill="none" stroke="#d8d8d8" stroke-width="1.2"/><path d="M11.5 1.7 L14.4 4.6 H11.5 Z" fill="#d8d8d8"/><path d="M4.6 4.6 H1.6 V14.4 H11.3 V11.4" fill="none" stroke="#d8d8d8" stroke-width="1.2"/></svg>
<svg class="a" style="left:902px;top:586px;" width="10" height="10" viewBox="0 0 10 10"><path d="M1 1 L9 9 M9 1 L1 9" stroke="#d0d0d0" stroke-width="1.3"/></svg>
<svg class="a" style="left:925px;top:583px;" width="16" height="16" viewBox="0 0 16 16"><path d="M9 2 L14 7 L12 8 L9.5 10.5 L9.5 13 L3 6.5 L5.5 6.5 L8 4 Z M6 10 L2 14" fill="none" stroke="#b8b8b8" stroke-width="1.1"/></svg>
<div class="a" style="left:1456px;top:581px;width:20px;height:20px;background:#282828;border-radius:4px;box-sizing:border-box;border:1px solid #333;"></div>
<svg class="a" style="left:1458px;top:583px;" width="16" height="16" viewBox="0 0 16 16"><path d="M5 3 V13.5 H12 M2 6 L5 3 L8 6" fill="none" stroke="#6a6a6a" stroke-width="1.1"/></svg>
<div class="a" style="left:1481px;top:581px;width:52px;height:20px;background:#282828;border-radius:4px;box-sizing:border-box;border:1px solid #3a3a3a;"></div>
<div class="a" style="left:1482px;top:582px;width:18px;height:18px;background:#4a4a4a;border-radius:3px 0 0 3px;"></div>
<svg class="a" style="left:1483px;top:583px;" width="16" height="16" viewBox="0 0 16 16"><path d="M9 14 L12.2 10.8 A5 5 0 0 0 5 3.6 A5 5 0 0 0 4 11 M4 11 L7 8 A1.6 1.6 0 0 1 9.6 10.2 L6.8 13" fill="none" stroke="#c8c8c8" stroke-width="1.1"/></svg>
<svg class="a" style="left:1503px;top:583px;" width="16" height="16" viewBox="0 0 16 16"><path d="M1 11 H14 M1 14.5 H14 M5 8 V16 M10.5 1.5 V16 M6.5 5 H14" stroke="#e0e0e0" stroke-width="1.1"/><rect x="1.5" y="1.5" width="4" height="4" fill="#e8e8e8"/></svg>
<svg class="a" style="left:1521px;top:588.5px;" width="8" height="6" viewBox="0 0 8 6"><path d="M1 1.5 L4 4.5 L7 1.5" fill="none" stroke="#d0d0d0" stroke-width="1.2"/></svg>
<div class="a" style="left:1538px;top:581px;width:39px;height:20px;background:#282828;border-radius:4px;box-sizing:border-box;border:1px solid #3a3a3a;"></div>
<div class="a" style="left:1538px;top:581px;width:19px;height:20px;background:#4772b3;border-radius:4px 0 0 4px;"></div>
<svg class="a" style="left:1539px;top:582px;" width="17" height="19" viewBox="0 0 17 19"><circle cx="10.5" cy="8" r="5" fill="#fff"/><path d="M8 15.5 A5 5 0 0 1 5.5 6.6" fill="none" stroke="#fff" stroke-width="1.2"/><path d="M9 7 L10.5 7.5 M11.5 9.5 V11" stroke="#4772b3" stroke-width="0.8"/></svg>
<svg class="a" style="left:1563px;top:588.5px;" width="8" height="6" viewBox="0 0 8 6"><path d="M1 1.5 L4 4.5 L7 1.5" fill="none" stroke="#d0d0d0" stroke-width="1.2"/></svg>
<svg class="a" style="left:1px;top:620px;" width="6" height="10" viewBox="0 0 6 10"><path d="M1.5 1.5 L4.5 5 L1.5 8.5" fill="none" stroke="#9a9a9a" stroke-width="1"/></svg>
<svg class="a" style="left:18px;top:618px;" width="14" height="14" viewBox="0 0 14 14"><path d="M1 4 V1 H4 M10 1 H13 V4 M13 10 V13 H10 M4 13 H1 V10" fill="none" stroke="#e0e0e0" stroke-width="1.1"/><rect x="3.5" y="3.5" width="7" height="7" fill="#e0e0e0"/></svg>
<div class="t" style="left:42px;top:616.5px;font-size:11.2px;line-height:17px;color:#e6e6e6;">Plane</div>
<svg class="a" style="left:84.5px;top:620.5px;" width="7.0" height="9.0" viewBox="0 0 7.0 9.0"><path d="M2.1 1 L5.25 4.5 L2.1 8.0" fill="none" stroke="#d0d0d0" stroke-width="1.2"/></svg>
<svg class="a" style="left:99px;top:617px;" width="17" height="16" viewBox="0 0 17 16"><path d="M3.5 3.5 H13.5 L8.5 13 Z" fill="none" stroke="#e0e0e0" stroke-width="1.2"/><rect x="1.5" y="1.5" width="3.5" height="3.5" fill="#1d1d1d" stroke="#e0e0e0" stroke-width="1.1"/><rect x="12" y="1.5" width="3.5" height="3.5" fill="#1d1d1d" stroke="#e0e0e0" stroke-width="1.1"/><rect x="6.8" y="11.5" width="3.5" height="3.5" fill="#1d1d1d" stroke="#e0e0e0" stroke-width="1.1"/></svg>
<div class="t" style="left:124px;top:616.5px;font-size:11.2px;line-height:17px;color:#e6e6e6;">Plane.002</div>
<svg class="a" style="left:189.5px;top:620.5px;" width="7.0" height="9.0" viewBox="0 0 7.0 9.0"><path d="M2.1 1 L5.25 4.5 L2.1 8.0" fill="none" stroke="#d0d0d0" stroke-width="1.2"/></svg>
<svg class="a" style="left:206px;top:617px;" width="16" height="16" viewBox="0 0 16 16"><circle cx="8" cy="8" r="6.5" fill="#e6e6e6"/><path d="M8 8 H14.5 A6.5 6.5 0 0 1 8 14.5 Z" fill="#1d1d1d"/><path d="M8 8 V1.5 A6.5 6.5 0 0 0 1.5 8 Z" fill="#1d1d1d"/><circle cx="8" cy="8" r="6.5" fill="none" stroke="#e6e6e6" stroke-width="1"/></svg>
<div class="t" style="left:230px;top:616.5px;font-size:11.2px;line-height:17px;color:#e6e6e6;">Material.001</div>
<div class="a" style="left:1366px;top:603px;width:199px;height:392px;background:#2e2e2e;"></div>
<div class="a" style="left:1565px;top:603px;width:20px;height:392px;background:#1d1d1d;border-radius:0 0 6px 0;"></div>
<div class="a" style="left:1374px;top:605px;width:184px;height:261px;background:#3d3d3d;border-radius:4px;"></div>
<svg class="a" style="left:1381px;top:613px;" width="10" height="10" viewBox="0 0 10 10"><path d="M1 3 L5 7 L9 3" fill="none" stroke="#cfcfcf" stroke-width="1.1"/></svg>
<div class="t" style="left:1396px;top:609.5px;font-size:11.2px;line-height:17px;color:#e6e6e6;">Settings</div>
<svg class="a" style="left:1541px;top:615px;" width="10" height="6" viewBox="0 0 10 6"><rect x="0.0" y="0" width="1.3" height="1.3" fill="#222222"/><rect x="0.0" y="3" width="1.3" height="1.3" fill="#222222"/><rect x="2.6" y="0" width="1.3" height="1.3" fill="#222222"/><rect x="2.6" y="3" width="1.3" height="1.3" fill="#222222"/><rect x="5.2" y="0" width="1.3" height="1.3" fill="#222222"/><rect x="5.2" y="3" width="1.3" height="1.3" fill="#222222"/><rect x="7.800000000000001" y="0" width="1.3" height="1.3" fill="#222222"/><rect x="7.800000000000001" y="3" width="1.3" height="1.3" fill="#222222"/></svg>
<div class="a" style="left:1455px;top:642px;width:12px;height:12px;background:#545454;border-radius:2px;"></div>
<div class="t" style="left:1471px;top:639.5px;font-size:11.2px;line-height:17px;color:#e6e6e6;">Backface Cull...</div>
<div class="t" style="right:475px;top:664.5px;font-size:11.2px;line-height:17px;color:#e6e6e6;">Blend Mode</div>
<div class="a" style="left:1455px;top:664px;width:94px;height:18px;background:#282828;border-radius:4px;"></div>
<div class="t" style="left:1462px;top:664.5px;font-size:11.2px;line-height:17px;color:#e6e6e6;">Alpha Blend</div>
<svg class="a" style="left:1538px;top:670.5px;" width="8" height="6" viewBox="0 0 8 6"><path d="M1 1.5 L4 4.5 L7 1.5" fill="none" stroke="#d0d0d0" stroke-width="1.2"/></svg>
<div class="t" style="left:1382px;top:689.5px;font-size:11.2px;line-height:17px;color:#e6e6e6;">Shadow Mo</div>
<div class="a" style="left:1455px;top:689px;width:94px;height:18px;background:#282828;border-radius:4px;"></div>
<div class="t" style="left:1462px;top:689.5px;font-size:11.2px;line-height:17px;color:#e6e6e6;">None</div>
<svg class="a" style="left:1538px;top:695.5px;" width="8" height="6" viewBox="0 0 8 6"><path d="M1 1.5 L4 4.5 L7 1.5" fill="none" stroke="#d0d0d0" stroke-width="1.2"/></svg>
<div class="t" style="right:475px;top:714.5px;font-size:11.2px;line-height:17px;color:#7a7a7a;">Clip Thresh...</div>
<div class="a" style="left:1455px;top:714px;width:94px;height:18px;background:#454545;border-radius:4px;"></div>
<div class="t" style="left:1457.0px;top:714.5px;width:90px;text-align:center;font-size:11.2px;line-height:17px;color:#7a7a7a;">0.000</div>
<div class="a" style="left:1455px;top:742px;width:12px;height:12px;background:#4772b3;border-radius:2px;"></div>
<svg class="a" style="left:1455px;top:742px;" width="12" height="12" viewBox="0 0 12 12"><path d="M2.5 6 L5 8.5 L9.5 3.5" fill="none" stroke="#fff" stroke-width="1.6"/></svg>
<div class="t" style="left:1471px;top:739.5px;font-size:11.2px;line-height:17px;color:#e6e6e6;">Show Backface</div>
<div class="a" style="left:1455px;top:767px;width:12px;height:12px;background:#545454;border-radius:2px;"></div>
<div class="t" style="left:1471px;top:764.5px;font-size:11.2px;line-height:17px;color:#e6e6e6;">Screen Space...</div>
<div class="t" style="right:475px;top:789.5px;font-size:11.2px;line-height:17px;color:#e6e6e6;">Refraction ...</div>
<div class="a" style="left:1455px;top:789px;width:94px;height:18px;background:#545454;border-radius:4px;"></div>
<div class="t" style="left:1457.0px;top:789.5px;width:90px;text-align:center;font-size:11.2px;line-height:17px;color:#e6e6e6;">0 m</div>
<div class="a" style="left:1455px;top:817px;width:12px;height:12px;background:#545454;border-radius:2px;"></div>
<div class="t" style="left:1471px;top:814.5px;font-size:11.2px;line-height:17px;color:#e6e6e6;">Subsurface Tr...</div>
<div class="t" style="right:475px;top:839.5px;font-size:11.2px;line-height:17px;color:#e6e6e6;">Pass Index</div>
<div class="a" style="left:1455px;top:839px;width:94px;height:18px;background:#545454;border-radius:4px;"></div>
<div class="t" style="left:1457.0px;top:839.5px;width:90px;text-align:center;font-size:11.2px;line-height:17px;color:#e6e6e6;">0</div>
<div class="a" style="left:1374px;top:868px;width:184px;height:24px;background:#3d3d3d;border-radius:4px;"></div>
<svg class="a" style="left:1382.7px;top:875.7px;" width="6.6" height="8.6" viewBox="0 0 6.6 8.6"><path d="M1.9799999999999998 1 L4.949999999999999 4.3 L1.9799999999999998 7.6" fill="none" stroke="#cfcfcf" stroke-width="1.2"/></svg>
<div class="t" style="left:1396px;top:871.5px;font-size:11.2px;line-height:17px;color:#e6e6e6;">Viewport Display</div>
<svg class="a" style="left:1541px;top:877px;" width="10" height="6" viewBox="0 0 10 6"><rect x="0.0" y="0" width="1.3" height="1.3" fill="#222222"/><rect x="0.0" y="3" width="1.3" height="1.3" fill="#222222"/><rect x="2.6" y="0" width="1.3" height="1.3" fill="#222222"/><rect x="2.6" y="3" width="1.3" height="1.3" fill="#222222"/><rect x="5.2" y="0" width="1.3" height="1.3" fill="#222222"/><rect x="5.2" y="3" width="1.3" height="1.3" fill="#222222"/><rect x="7.800000000000001" y="0" width="1.3" height="1.3" fill="#222222"/><rect x="7.800000000000001" y="3" width="1.3" height="1.3" fill="#222222"/></svg>
<div class="a" style="left:1565px;top:608px;width:17px;height:42px;background:#222222;border-radius:0 4px 4px 0;box-sizing:border-box;border:1px solid #3a3a3a;"></div>
<div class="t" style="left:1513.5px;top:620.5px;width:120px;height:17px;line-height:17px;text-align:center;font-size:11.2px;color:#d0d0d0;transform:rotate(-90deg);">Node</div>
<div class="a" style="left:1565px;top:654px;width:17px;height:37px;background:#222222;border-radius:0 4px 4px 0;box-sizing:border-box;border:1px solid #3a3a3a;"></div>
<div class="t" style="left:1513.5px;top:664.0px;width:120px;height:17px;line-height:17px;text-align:center;font-size:11.2px;color:#d0d0d0;transform:rotate(-90deg);">Tool</div>
<div class="a" style="left:1565px;top:696px;width:17px;height:39px;background:#222222;border-radius:0 4px 4px 0;box-sizing:border-box;border:1px solid #3a3a3a;"></div>
<div class="t" style="left:1513.5px;top:707.0px;width:120px;height:17px;line-height:17px;text-align:center;font-size:11.2px;color:#d0d0d0;transform:rotate(-90deg);">View</div>
<div class="a" style="left:1565px;top:740px;width:17px;height:53px;background:#303030;border-radius:0 4px 4px 0;box-sizing:border-box;border:1px solid #3a3a3a;"></div>
<div class="t" style="left:1513.5px;top:758.0px;width:120px;height:17px;line-height:17px;text-align:center;font-size:11.2px;color:#ffffff;transform:rotate(-90deg);">Options</div>
<div class="a" style="left:1565px;top:798px;width:17px;height:89px;background:#222222;border-radius:0 4px 4px 0;box-sizing:border-box;border:1px solid #3a3a3a;"></div>
<div class="t" style="left:1513.5px;top:834.0px;width:120px;height:17px;line-height:17px;text-align:center;font-size:11.2px;color:#d0d0d0;transform:rotate(-90deg);">Node Wrangler</div>
<div class="a" style="left:0px;top:997px;width:1920px;height:19px;background:#1d1d1d;"></div>
<svg class="a" style="left:11px;top:999px;" width="12" height="15" viewBox="0 0 12 15"><rect x="1.5" y="1.5" width="9" height="12" rx="3.5" fill="none" stroke="#b0b0b0" stroke-width="1.1"/><path d="M2 7 V5 A3.5 3.5 0 0 1 5.5 1.5 H6 V7 Z" fill="#b0b0b0"/></svg>
<div class="t" style="left:34px;top:997.5px;font-size:11.2px;line-height:17px;color:#bdbdbd;">Select</div>
<svg class="a" style="left:221px;top:999px;" width="12" height="15" viewBox="0 0 12 15"><rect x="1.5" y="1.5" width="9" height="12" rx="3.5" fill="none" stroke="#b0b0b0" stroke-width="1.1"/><rect x="5" y="3.5" width="2" height="4" rx="1" fill="#b0b0b0"/></svg>
<div class="t" style="left:245px;top:997.5px;font-size:11.2px;line-height:17px;color:#bdbdbd;">Rotate View</div>
<svg class="a" style="left:432px;top:999px;" width="12" height="15" viewBox="0 0 12 15"><rect x="1.5" y="1.5" width="9" height="12" rx="3.5" fill="none" stroke="#b0b0b0" stroke-width="1.1"/><path d="M10 7 V5 A3.5 3.5 0 0 0 6.5 1.5 H6 V7 Z" fill="#b0b0b0"/></svg>
<div class="t" style="left:456px;top:997.5px;font-size:11.2px;line-height:17px;color:#bdbdbd;">Object Context Menu</div>
<div class="t" style="right:9px;top:997.5px;font-size:11.2px;line-height:17px;color:#9a9a9a;">3.2.0</div>
</div></body></html>
